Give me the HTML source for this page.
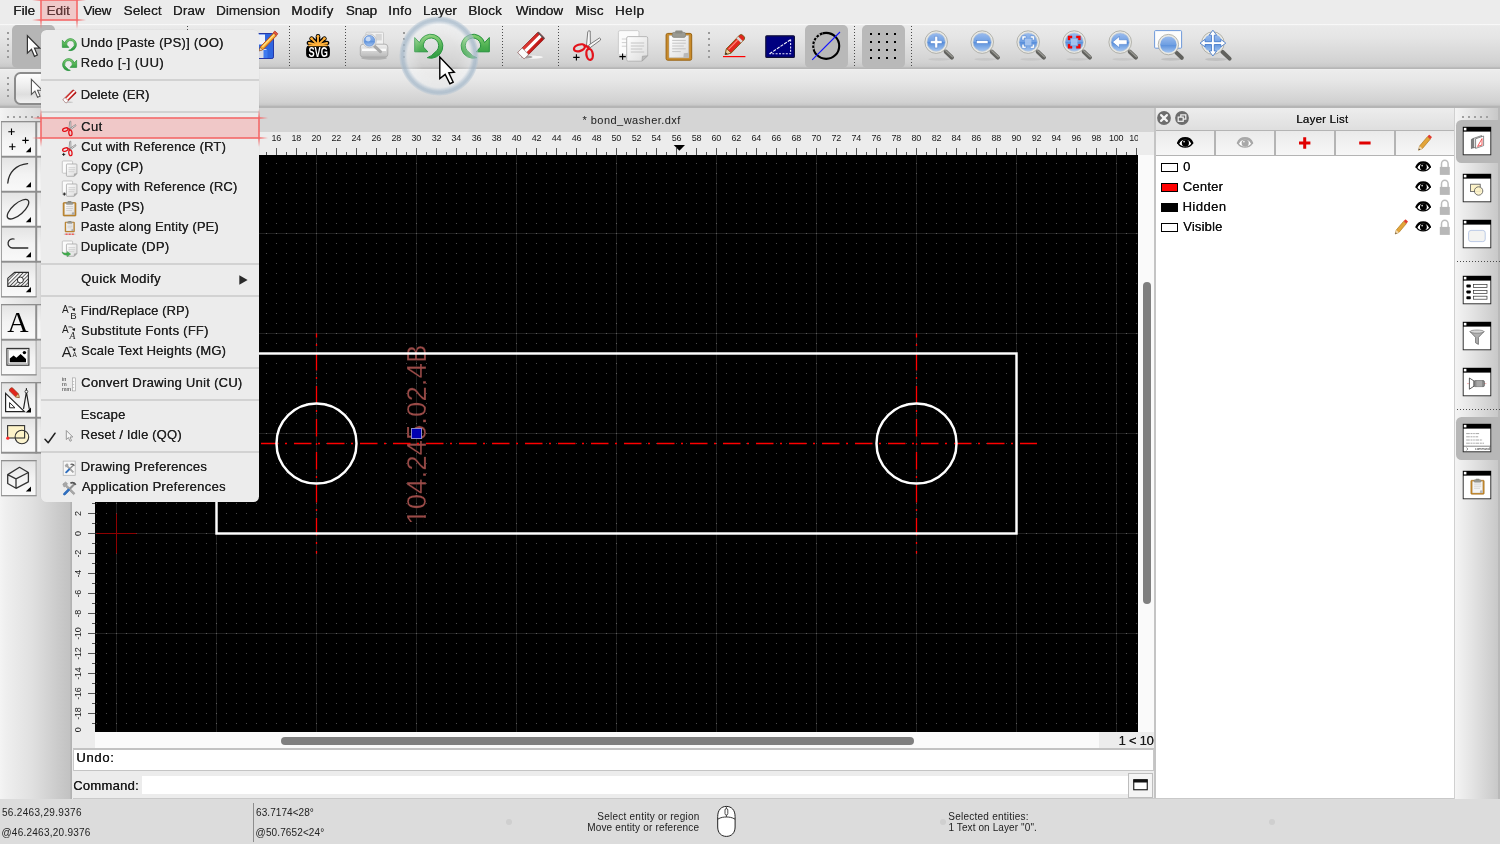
<!DOCTYPE html>
<html lang="en"><head><meta charset="utf-8"><title>QCAD - bond_washer.dxf</title>
<style>
html,body{margin:0;padding:0;}
body{width:1500px;height:844px;overflow:hidden;background:#ececec;font-family:"Liberation Sans",sans-serif;position:relative;}
#app{will-change:transform;position:absolute;left:0;top:0;width:1500px;height:844px;overflow:hidden;}
.b{position:absolute;box-sizing:border-box;display:block;}
.t{position:absolute;white-space:pre;line-height:0;display:block;}
.hv{text-shadow:0.22px 0 0 currentColor;}
.md{text-shadow:0.18px 0 0 currentColor;}
</style></head>
<body><div id="app">
<!-- menubar -->
<div class="b" style="left:0px;top:0px;width:1500px;height:24px;background:#ececec;"></div>
<span class="t hv" style="left:13.19px;top:11.00px;font-size:13.5px;letter-spacing:0.051px;color:#262626;">File</span>
<span class="t hv" style="left:46.49px;top:11.00px;font-size:13.5px;letter-spacing:-0.019px;color:#262626;">Edit</span>
<span class="t hv" style="left:83.34px;top:11.00px;font-size:13.5px;letter-spacing:-0.378px;color:#262626;">View</span>
<span class="t hv" style="left:123.59px;top:11.00px;font-size:13.5px;letter-spacing:0.078px;color:#262626;">Select</span>
<span class="t hv" style="left:172.89px;top:11.00px;font-size:13.5px;letter-spacing:0.091px;color:#262626;">Draw</span>
<span class="t hv" style="left:215.99px;top:11.00px;font-size:13.5px;letter-spacing:0.039px;color:#262626;">Dimension</span>
<span class="t hv" style="left:291.29px;top:11.00px;font-size:13.5px;letter-spacing:0.434px;color:#262626;">Modify</span>
<span class="t hv" style="left:345.69px;top:11.00px;font-size:13.5px;letter-spacing:-0.050px;color:#262626;">Snap</span>
<span class="t hv" style="left:388.15px;top:11.00px;font-size:13.5px;letter-spacing:0.332px;color:#262626;">Info</span>
<span class="t hv" style="left:422.89px;top:11.00px;font-size:13.5px;letter-spacing:0.015px;color:#262626;">Layer</span>
<span class="t hv" style="left:468.29px;top:11.00px;font-size:13.5px;letter-spacing:0.119px;color:#262626;">Block</span>
<span class="t hv" style="left:515.84px;top:11.00px;font-size:13.5px;letter-spacing:-0.178px;color:#262626;">Window</span>
<span class="t hv" style="left:575.29px;top:11.00px;font-size:13.5px;letter-spacing:0.140px;color:#262626;">Misc</span>
<span class="t hv" style="left:614.89px;top:11.00px;font-size:13.5px;letter-spacing:0.470px;color:#262626;">Help</span>
<!-- toolbars -->
<div class="b" style="left:0px;top:24px;width:1500px;height:45px;background:linear-gradient(#fbfbfb 0,#f6f6f6 0.8px,#eaeaea 1.6px,#e5e5e5 30%,#d2d2d2 85%,#cacaca 42.4px,#b6b6b6 44px,#b6b6b6);"></div>
<div class="b" style="left:0px;top:69px;width:1500px;height:38.5px;background:linear-gradient(#f2f2f2 0,#ececec 1.5px,#e6e6e6 30%,#d1d1d1 85%,#c9c9c9 35.8px,#b5b5b5 37.5px,#b5b5b5);"></div>
<div class="b" style="left:0px;top:107.5px;width:1500px;height:25px;background:#d5d5d5;"></div>
<svg class="b" style="left:0px;top:0px;" width="1500" height="110" viewBox="0 0 1500 110"><rect x="7" y="32" width="2" height="2" fill="#9a9a9a"/><rect x="7" y="38" width="2" height="2" fill="#9a9a9a"/><rect x="7" y="44" width="2" height="2" fill="#9a9a9a"/><rect x="7" y="50" width="2" height="2" fill="#9a9a9a"/><rect x="7" y="56" width="2" height="2" fill="#9a9a9a"/><rect x="7" y="77" width="2" height="2" fill="#9a9a9a"/><rect x="7" y="83" width="2" height="2" fill="#9a9a9a"/><rect x="7" y="89" width="2" height="2" fill="#9a9a9a"/><rect x="7" y="95" width="2" height="2" fill="#9a9a9a"/><rect x="403" y="32" width="2" height="2" fill="#9a9a9a"/><rect x="403" y="38" width="2" height="2" fill="#9a9a9a"/><rect x="403" y="44" width="2" height="2" fill="#9a9a9a"/><rect x="403" y="50" width="2" height="2" fill="#9a9a9a"/><rect x="403" y="56" width="2" height="2" fill="#9a9a9a"/><rect x="708" y="32" width="2" height="2" fill="#9a9a9a"/><rect x="708" y="38" width="2" height="2" fill="#9a9a9a"/><rect x="708" y="44" width="2" height="2" fill="#9a9a9a"/><rect x="708" y="50" width="2" height="2" fill="#9a9a9a"/><rect x="708" y="56" width="2" height="2" fill="#9a9a9a"/><line x1="187.5" y1="26" x2="187.5" y2="66" stroke="#4a4a4a" stroke-width="1" stroke-dasharray="1 2"/><line x1="289.5" y1="26" x2="289.5" y2="66" stroke="#4a4a4a" stroke-width="1" stroke-dasharray="1 2"/><line x1="345.5" y1="26" x2="345.5" y2="66" stroke="#4a4a4a" stroke-width="1" stroke-dasharray="1 2"/><line x1="502.5" y1="26" x2="502.5" y2="66" stroke="#4a4a4a" stroke-width="1" stroke-dasharray="1 2"/><line x1="558.5" y1="26" x2="558.5" y2="66" stroke="#4a4a4a" stroke-width="1" stroke-dasharray="1 2"/><line x1="854.5" y1="26" x2="854.5" y2="66" stroke="#4a4a4a" stroke-width="1" stroke-dasharray="1 2"/><line x1="911.5" y1="26" x2="911.5" y2="66" stroke="#4a4a4a" stroke-width="1" stroke-dasharray="1 2"/></svg>
<div class="b" style="left:12px;top:25px;width:43px;height:43px;background:#b5b5b5;border-radius:5px;"></div>
<div class="b" style="left:13.6px;top:72.2px;width:60px;height:32.6px;border:2px solid #8c8c8c;border-radius:6.5px;background:linear-gradient(#fefefe,#ececec 45%,#dedede 70%,#f0f0f0);"></div>
<div class="b" style="left:805px;top:25px;width:43px;height:43px;background:#b9b9b9;border-radius:5px;"></div>
<div class="b" style="left:862px;top:25px;width:43px;height:43px;background:#b9b9b9;border-radius:5px;"></div>
<!-- left tools -->
<div class="b" style="left:0px;top:107.5px;width:71.8px;height:691.3px;background:linear-gradient(90deg,#f4f4f4 0,#efefef 8%,#e0e0e0 45%,#cbcbcb 80%,#c2c2c2 97%,#b2b2b2 98.5%,#b2b2b2);"></div>
<svg class="b" style="left:0px;top:110px;" width="72" height="12" viewBox="0 0 72 12"><rect x="7" y="6" width="2" height="2" fill="#a0a0a0"/><rect x="13" y="6" width="2" height="2" fill="#a0a0a0"/><rect x="19" y="6" width="2" height="2" fill="#a0a0a0"/><rect x="25" y="6" width="2" height="2" fill="#a0a0a0"/><rect x="31" y="6" width="2" height="2" fill="#a0a0a0"/><rect x="37" y="6" width="2" height="2" fill="#a0a0a0"/></svg>
<svg class="b" style="left:0px;top:108px;" width="72" height="400" viewBox="0 108 72 400"><defs><linearGradient id="gBtn" x1="0" y1="0" x2="0" y2="1"><stop offset="0" stop-color="#e3e3e3"/><stop offset="0.5" stop-color="#f3f3f3"/><stop offset="1" stop-color="#f9f9f9"/></linearGradient></defs><rect x="1.5" y="121.6" width="34.6" height="35" fill="url(#gBtn)" stroke="#a3a3a3" stroke-width="1"/><rect x="36.2" y="121.6" width="34.6" height="35" fill="url(#gBtn)" stroke="#a3a3a3" stroke-width="1"/><rect x="1.5" y="157" width="34.6" height="35" fill="url(#gBtn)" stroke="#a3a3a3" stroke-width="1"/><rect x="36.2" y="157" width="34.6" height="35" fill="url(#gBtn)" stroke="#a3a3a3" stroke-width="1"/><rect x="1.5" y="192" width="34.6" height="35" fill="url(#gBtn)" stroke="#a3a3a3" stroke-width="1"/><rect x="36.2" y="192" width="34.6" height="35" fill="url(#gBtn)" stroke="#a3a3a3" stroke-width="1"/><rect x="1.5" y="227" width="34.6" height="35" fill="url(#gBtn)" stroke="#a3a3a3" stroke-width="1"/><rect x="36.2" y="227" width="34.6" height="35" fill="url(#gBtn)" stroke="#a3a3a3" stroke-width="1"/><rect x="1.5" y="262" width="34.6" height="35" fill="url(#gBtn)" stroke="#a3a3a3" stroke-width="1"/><line x1="1" y1="121.7" x2="71" y2="121.7" stroke="#8e8e8e" stroke-width="1.2"/><line x1="1" y1="156.7" x2="71" y2="156.7" stroke="#8e8e8e" stroke-width="1.8"/><line x1="1" y1="191.7" x2="71" y2="191.7" stroke="#8e8e8e" stroke-width="1.8"/><line x1="1" y1="226.7" x2="71" y2="226.7" stroke="#8e8e8e" stroke-width="1.8"/><line x1="1" y1="261.7" x2="71" y2="261.7" stroke="#8e8e8e" stroke-width="1.8"/><line x1="1" y1="296.7" x2="36.6" y2="296.7" stroke="#8e8e8e" stroke-width="1.1"/><line x1="36.3" y1="121.4" x2="36.3" y2="262.4" stroke="#8e8e8e" stroke-width="1.8"/><rect x="1.5" y="304.6" width="34.6" height="35" fill="url(#gBtn)" stroke="#a3a3a3" stroke-width="1"/><rect x="36.2" y="304.6" width="34.6" height="35" fill="url(#gBtn)" stroke="#a3a3a3" stroke-width="1"/><rect x="1.5" y="340" width="34.6" height="35" fill="url(#gBtn)" stroke="#a3a3a3" stroke-width="1"/><line x1="1" y1="304.7" x2="71" y2="304.7" stroke="#8e8e8e" stroke-width="1.2"/><line x1="1" y1="339.7" x2="71" y2="339.7" stroke="#8e8e8e" stroke-width="1.8"/><line x1="1" y1="374.7" x2="36.6" y2="374.7" stroke="#8e8e8e" stroke-width="1.1"/><line x1="36.3" y1="304.4" x2="36.3" y2="340.4" stroke="#8e8e8e" stroke-width="1.8"/><rect x="1.5" y="382.6" width="34.6" height="35" fill="url(#gBtn)" stroke="#a3a3a3" stroke-width="1"/><rect x="36.2" y="382.6" width="34.6" height="35" fill="url(#gBtn)" stroke="#a3a3a3" stroke-width="1"/><rect x="1.5" y="418" width="34.6" height="35" fill="url(#gBtn)" stroke="#a3a3a3" stroke-width="1"/><rect x="36.2" y="418" width="34.6" height="35" fill="url(#gBtn)" stroke="#a3a3a3" stroke-width="1"/><line x1="1" y1="382.7" x2="71" y2="382.7" stroke="#8e8e8e" stroke-width="1.2"/><line x1="1" y1="417.7" x2="71" y2="417.7" stroke="#8e8e8e" stroke-width="1.8"/><line x1="1" y1="452.7" x2="71" y2="452.7" stroke="#8e8e8e" stroke-width="1.8"/><line x1="36.3" y1="382.4" x2="36.3" y2="453.4" stroke="#8e8e8e" stroke-width="1.8"/><rect x="1.5" y="460.6" width="34.6" height="35" fill="url(#gBtn)" stroke="#a3a3a3" stroke-width="1"/><line x1="1" y1="460.7" x2="36.6" y2="460.7" stroke="#8e8e8e" stroke-width="1.2"/><line x1="1" y1="495.7" x2="36.6" y2="495.7" stroke="#8e8e8e" stroke-width="1.1"/></svg>
<!-- document title -->
<span class="t" style="left:582.52px;top:120.00px;font-size:11px;letter-spacing:0.459px;color:#1a1a1a;">* bond_washer.dxf</span>
<!-- rulers -->
<div class="b" style="left:71.8px;top:132px;width:1082.2px;height:23px;background:#ececec;"></div>
<div class="b" style="left:71.8px;top:155px;width:23.2px;height:593.5px;background:#ececec;"></div>
<div class="b" style="left:1138px;top:155px;width:15.5px;height:577px;background:#fafafa;"></div>
<div class="b" style="left:95px;top:732px;width:1058.5px;height:16.5px;background:#fafafa;"></div>
<div class="b" style="left:1143px;top:282px;width:8px;height:322px;background:#7f7f7f;border-radius:4px;"></div>
<div class="b" style="left:281px;top:737px;width:633px;height:8px;background:#7f7f7f;border-radius:4px;"></div>
<div class="b" style="left:1099px;top:732px;width:54.5px;height:16.5px;background:#ececec;"></div>
<span class="t md" style="left:1118.61px;top:741.00px;font-size:13px;letter-spacing:-0.281px;color:#1a1a1a;">1 &lt; 10</span>
<svg class="b" style="left:72px;top:132px;" width="1066" height="23" viewBox="0 0 1066 23"><line x1="24.5" y1="16" x2="24.5" y2="23" stroke="#555" stroke-width="1"/><line x1="34.5" y1="20" x2="34.5" y2="23" stroke="#555" stroke-width="1"/><line x1="44.5" y1="16" x2="44.5" y2="23" stroke="#555" stroke-width="1"/><line x1="54.5" y1="20" x2="54.5" y2="23" stroke="#555" stroke-width="1"/><line x1="64.5" y1="16" x2="64.5" y2="23" stroke="#555" stroke-width="1"/><line x1="74.5" y1="20" x2="74.5" y2="23" stroke="#555" stroke-width="1"/><line x1="84.5" y1="16" x2="84.5" y2="23" stroke="#555" stroke-width="1"/><line x1="94.5" y1="20" x2="94.5" y2="23" stroke="#555" stroke-width="1"/><line x1="104.5" y1="16" x2="104.5" y2="23" stroke="#555" stroke-width="1"/><line x1="114.5" y1="20" x2="114.5" y2="23" stroke="#555" stroke-width="1"/><line x1="124.5" y1="16" x2="124.5" y2="23" stroke="#555" stroke-width="1"/><line x1="134.5" y1="20" x2="134.5" y2="23" stroke="#555" stroke-width="1"/><line x1="144.5" y1="16" x2="144.5" y2="23" stroke="#555" stroke-width="1"/><line x1="154.5" y1="20" x2="154.5" y2="23" stroke="#555" stroke-width="1"/><line x1="164.5" y1="16" x2="164.5" y2="23" stroke="#555" stroke-width="1"/><line x1="174.5" y1="20" x2="174.5" y2="23" stroke="#555" stroke-width="1"/><line x1="184.5" y1="16" x2="184.5" y2="23" stroke="#555" stroke-width="1"/><line x1="194.5" y1="20" x2="194.5" y2="23" stroke="#555" stroke-width="1"/><line x1="204.5" y1="16" x2="204.5" y2="23" stroke="#555" stroke-width="1"/><line x1="214.5" y1="20" x2="214.5" y2="23" stroke="#555" stroke-width="1"/><line x1="224.5" y1="16" x2="224.5" y2="23" stroke="#555" stroke-width="1"/><line x1="234.5" y1="20" x2="234.5" y2="23" stroke="#555" stroke-width="1"/><line x1="244.5" y1="16" x2="244.5" y2="23" stroke="#555" stroke-width="1"/><line x1="254.5" y1="20" x2="254.5" y2="23" stroke="#555" stroke-width="1"/><line x1="264.5" y1="16" x2="264.5" y2="23" stroke="#555" stroke-width="1"/><line x1="274.5" y1="20" x2="274.5" y2="23" stroke="#555" stroke-width="1"/><line x1="284.5" y1="16" x2="284.5" y2="23" stroke="#555" stroke-width="1"/><line x1="294.5" y1="20" x2="294.5" y2="23" stroke="#555" stroke-width="1"/><line x1="304.5" y1="16" x2="304.5" y2="23" stroke="#555" stroke-width="1"/><line x1="314.5" y1="20" x2="314.5" y2="23" stroke="#555" stroke-width="1"/><line x1="324.5" y1="16" x2="324.5" y2="23" stroke="#555" stroke-width="1"/><line x1="334.5" y1="20" x2="334.5" y2="23" stroke="#555" stroke-width="1"/><line x1="344.5" y1="16" x2="344.5" y2="23" stroke="#555" stroke-width="1"/><line x1="354.5" y1="20" x2="354.5" y2="23" stroke="#555" stroke-width="1"/><line x1="364.5" y1="16" x2="364.5" y2="23" stroke="#555" stroke-width="1"/><line x1="374.5" y1="20" x2="374.5" y2="23" stroke="#555" stroke-width="1"/><line x1="384.5" y1="16" x2="384.5" y2="23" stroke="#555" stroke-width="1"/><line x1="394.5" y1="20" x2="394.5" y2="23" stroke="#555" stroke-width="1"/><line x1="404.5" y1="16" x2="404.5" y2="23" stroke="#555" stroke-width="1"/><line x1="414.5" y1="20" x2="414.5" y2="23" stroke="#555" stroke-width="1"/><line x1="424.5" y1="16" x2="424.5" y2="23" stroke="#555" stroke-width="1"/><line x1="434.5" y1="20" x2="434.5" y2="23" stroke="#555" stroke-width="1"/><line x1="444.5" y1="16" x2="444.5" y2="23" stroke="#555" stroke-width="1"/><line x1="454.5" y1="20" x2="454.5" y2="23" stroke="#555" stroke-width="1"/><line x1="464.5" y1="16" x2="464.5" y2="23" stroke="#555" stroke-width="1"/><line x1="474.5" y1="20" x2="474.5" y2="23" stroke="#555" stroke-width="1"/><line x1="484.5" y1="16" x2="484.5" y2="23" stroke="#555" stroke-width="1"/><line x1="494.5" y1="20" x2="494.5" y2="23" stroke="#555" stroke-width="1"/><line x1="504.5" y1="16" x2="504.5" y2="23" stroke="#555" stroke-width="1"/><line x1="514.5" y1="20" x2="514.5" y2="23" stroke="#555" stroke-width="1"/><line x1="524.5" y1="16" x2="524.5" y2="23" stroke="#555" stroke-width="1"/><line x1="534.5" y1="20" x2="534.5" y2="23" stroke="#555" stroke-width="1"/><line x1="544.5" y1="16" x2="544.5" y2="23" stroke="#555" stroke-width="1"/><line x1="554.5" y1="20" x2="554.5" y2="23" stroke="#555" stroke-width="1"/><line x1="564.5" y1="16" x2="564.5" y2="23" stroke="#555" stroke-width="1"/><line x1="574.5" y1="20" x2="574.5" y2="23" stroke="#555" stroke-width="1"/><line x1="584.5" y1="16" x2="584.5" y2="23" stroke="#555" stroke-width="1"/><line x1="594.5" y1="20" x2="594.5" y2="23" stroke="#555" stroke-width="1"/><line x1="604.5" y1="16" x2="604.5" y2="23" stroke="#555" stroke-width="1"/><line x1="614.5" y1="20" x2="614.5" y2="23" stroke="#555" stroke-width="1"/><line x1="624.5" y1="16" x2="624.5" y2="23" stroke="#555" stroke-width="1"/><line x1="634.5" y1="20" x2="634.5" y2="23" stroke="#555" stroke-width="1"/><line x1="644.5" y1="16" x2="644.5" y2="23" stroke="#555" stroke-width="1"/><line x1="654.5" y1="20" x2="654.5" y2="23" stroke="#555" stroke-width="1"/><line x1="664.5" y1="16" x2="664.5" y2="23" stroke="#555" stroke-width="1"/><line x1="674.5" y1="20" x2="674.5" y2="23" stroke="#555" stroke-width="1"/><line x1="684.5" y1="16" x2="684.5" y2="23" stroke="#555" stroke-width="1"/><line x1="694.5" y1="20" x2="694.5" y2="23" stroke="#555" stroke-width="1"/><line x1="704.5" y1="16" x2="704.5" y2="23" stroke="#555" stroke-width="1"/><line x1="714.5" y1="20" x2="714.5" y2="23" stroke="#555" stroke-width="1"/><line x1="724.5" y1="16" x2="724.5" y2="23" stroke="#555" stroke-width="1"/><line x1="734.5" y1="20" x2="734.5" y2="23" stroke="#555" stroke-width="1"/><line x1="744.5" y1="16" x2="744.5" y2="23" stroke="#555" stroke-width="1"/><line x1="754.5" y1="20" x2="754.5" y2="23" stroke="#555" stroke-width="1"/><line x1="764.5" y1="16" x2="764.5" y2="23" stroke="#555" stroke-width="1"/><line x1="774.5" y1="20" x2="774.5" y2="23" stroke="#555" stroke-width="1"/><line x1="784.5" y1="16" x2="784.5" y2="23" stroke="#555" stroke-width="1"/><line x1="794.5" y1="20" x2="794.5" y2="23" stroke="#555" stroke-width="1"/><line x1="804.5" y1="16" x2="804.5" y2="23" stroke="#555" stroke-width="1"/><line x1="814.5" y1="20" x2="814.5" y2="23" stroke="#555" stroke-width="1"/><line x1="824.5" y1="16" x2="824.5" y2="23" stroke="#555" stroke-width="1"/><line x1="834.5" y1="20" x2="834.5" y2="23" stroke="#555" stroke-width="1"/><line x1="844.5" y1="16" x2="844.5" y2="23" stroke="#555" stroke-width="1"/><line x1="854.5" y1="20" x2="854.5" y2="23" stroke="#555" stroke-width="1"/><line x1="864.5" y1="16" x2="864.5" y2="23" stroke="#555" stroke-width="1"/><line x1="874.5" y1="20" x2="874.5" y2="23" stroke="#555" stroke-width="1"/><line x1="884.5" y1="16" x2="884.5" y2="23" stroke="#555" stroke-width="1"/><line x1="894.5" y1="20" x2="894.5" y2="23" stroke="#555" stroke-width="1"/><line x1="904.5" y1="16" x2="904.5" y2="23" stroke="#555" stroke-width="1"/><line x1="914.5" y1="20" x2="914.5" y2="23" stroke="#555" stroke-width="1"/><line x1="924.5" y1="16" x2="924.5" y2="23" stroke="#555" stroke-width="1"/><line x1="934.5" y1="20" x2="934.5" y2="23" stroke="#555" stroke-width="1"/><line x1="944.5" y1="16" x2="944.5" y2="23" stroke="#555" stroke-width="1"/><line x1="954.5" y1="20" x2="954.5" y2="23" stroke="#555" stroke-width="1"/><line x1="964.5" y1="16" x2="964.5" y2="23" stroke="#555" stroke-width="1"/><line x1="974.5" y1="20" x2="974.5" y2="23" stroke="#555" stroke-width="1"/><line x1="984.5" y1="16" x2="984.5" y2="23" stroke="#555" stroke-width="1"/><line x1="994.5" y1="20" x2="994.5" y2="23" stroke="#555" stroke-width="1"/><line x1="1004.5" y1="16" x2="1004.5" y2="23" stroke="#555" stroke-width="1"/><line x1="1014.5" y1="20" x2="1014.5" y2="23" stroke="#555" stroke-width="1"/><line x1="1024.5" y1="16" x2="1024.5" y2="23" stroke="#555" stroke-width="1"/><line x1="1034.5" y1="20" x2="1034.5" y2="23" stroke="#555" stroke-width="1"/><line x1="1044.5" y1="16" x2="1044.5" y2="23" stroke="#555" stroke-width="1"/><line x1="1054.5" y1="20" x2="1054.5" y2="23" stroke="#555" stroke-width="1"/><line x1="1064.5" y1="16" x2="1064.5" y2="23" stroke="#555" stroke-width="1"/><path d="M601.7 13 L613 13 L607.4 18.8 Z" fill="#000"/></svg>
<span class="t" style="left:271.47px;top:138.00px;font-size:9px;letter-spacing:-0.250px;color:#1a1a1a;">16</span>
<span class="t" style="left:291.47px;top:138.00px;font-size:9px;letter-spacing:-0.250px;color:#1a1a1a;">18</span>
<span class="t" style="left:311.57px;top:138.00px;font-size:9px;letter-spacing:-0.250px;color:#1a1a1a;">20</span>
<span class="t" style="left:331.62px;top:138.00px;font-size:9px;letter-spacing:-0.250px;color:#1a1a1a;">22</span>
<span class="t" style="left:351.53px;top:138.00px;font-size:9px;letter-spacing:-0.250px;color:#1a1a1a;">24</span>
<span class="t" style="left:371.59px;top:138.00px;font-size:9px;letter-spacing:-0.250px;color:#1a1a1a;">26</span>
<span class="t" style="left:391.59px;top:138.00px;font-size:9px;letter-spacing:-0.250px;color:#1a1a1a;">28</span>
<span class="t" style="left:411.62px;top:138.00px;font-size:9px;letter-spacing:-0.250px;color:#1a1a1a;">30</span>
<span class="t" style="left:431.67px;top:138.00px;font-size:9px;letter-spacing:-0.250px;color:#1a1a1a;">32</span>
<span class="t" style="left:451.58px;top:138.00px;font-size:9px;letter-spacing:-0.250px;color:#1a1a1a;">34</span>
<span class="t" style="left:471.65px;top:138.00px;font-size:9px;letter-spacing:-0.250px;color:#1a1a1a;">36</span>
<span class="t" style="left:491.64px;top:138.00px;font-size:9px;letter-spacing:-0.250px;color:#1a1a1a;">38</span>
<span class="t" style="left:511.69px;top:138.00px;font-size:9px;letter-spacing:-0.250px;color:#1a1a1a;">40</span>
<span class="t" style="left:531.74px;top:138.00px;font-size:9px;letter-spacing:-0.250px;color:#1a1a1a;">42</span>
<span class="t" style="left:551.65px;top:138.00px;font-size:9px;letter-spacing:-0.250px;color:#1a1a1a;">44</span>
<span class="t" style="left:571.71px;top:138.00px;font-size:9px;letter-spacing:-0.250px;color:#1a1a1a;">46</span>
<span class="t" style="left:591.71px;top:138.00px;font-size:9px;letter-spacing:-0.250px;color:#1a1a1a;">48</span>
<span class="t" style="left:611.62px;top:138.00px;font-size:9px;letter-spacing:-0.250px;color:#1a1a1a;">50</span>
<span class="t" style="left:631.67px;top:138.00px;font-size:9px;letter-spacing:-0.250px;color:#1a1a1a;">52</span>
<span class="t" style="left:651.57px;top:138.00px;font-size:9px;letter-spacing:-0.250px;color:#1a1a1a;">54</span>
<span class="t" style="left:671.64px;top:138.00px;font-size:9px;letter-spacing:-0.250px;color:#1a1a1a;">56</span>
<span class="t" style="left:691.64px;top:138.00px;font-size:9px;letter-spacing:-0.250px;color:#1a1a1a;">58</span>
<span class="t" style="left:711.57px;top:138.00px;font-size:9px;letter-spacing:-0.250px;color:#1a1a1a;">60</span>
<span class="t" style="left:731.62px;top:138.00px;font-size:9px;letter-spacing:-0.250px;color:#1a1a1a;">62</span>
<span class="t" style="left:751.52px;top:138.00px;font-size:9px;letter-spacing:-0.250px;color:#1a1a1a;">64</span>
<span class="t" style="left:771.59px;top:138.00px;font-size:9px;letter-spacing:-0.250px;color:#1a1a1a;">66</span>
<span class="t" style="left:791.59px;top:138.00px;font-size:9px;letter-spacing:-0.250px;color:#1a1a1a;">68</span>
<span class="t" style="left:811.56px;top:138.00px;font-size:9px;letter-spacing:-0.250px;color:#1a1a1a;">70</span>
<span class="t" style="left:831.62px;top:138.00px;font-size:9px;letter-spacing:-0.250px;color:#1a1a1a;">72</span>
<span class="t" style="left:851.52px;top:138.00px;font-size:9px;letter-spacing:-0.250px;color:#1a1a1a;">74</span>
<span class="t" style="left:871.59px;top:138.00px;font-size:9px;letter-spacing:-0.250px;color:#1a1a1a;">76</span>
<span class="t" style="left:891.58px;top:138.00px;font-size:9px;letter-spacing:-0.250px;color:#1a1a1a;">78</span>
<span class="t" style="left:911.60px;top:138.00px;font-size:9px;letter-spacing:-0.250px;color:#1a1a1a;">80</span>
<span class="t" style="left:931.65px;top:138.00px;font-size:9px;letter-spacing:-0.250px;color:#1a1a1a;">82</span>
<span class="t" style="left:951.56px;top:138.00px;font-size:9px;letter-spacing:-0.250px;color:#1a1a1a;">84</span>
<span class="t" style="left:971.62px;top:138.00px;font-size:9px;letter-spacing:-0.250px;color:#1a1a1a;">86</span>
<span class="t" style="left:991.62px;top:138.00px;font-size:9px;letter-spacing:-0.250px;color:#1a1a1a;">88</span>
<span class="t" style="left:1011.58px;top:138.00px;font-size:9px;letter-spacing:-0.250px;color:#1a1a1a;">90</span>
<span class="t" style="left:1031.64px;top:138.00px;font-size:9px;letter-spacing:-0.250px;color:#1a1a1a;">92</span>
<span class="t" style="left:1051.54px;top:138.00px;font-size:9px;letter-spacing:-0.250px;color:#1a1a1a;">94</span>
<span class="t" style="left:1071.61px;top:138.00px;font-size:9px;letter-spacing:-0.250px;color:#1a1a1a;">96</span>
<span class="t" style="left:1091.60px;top:138.00px;font-size:9px;letter-spacing:-0.250px;color:#1a1a1a;">98</span>
<span class="t" style="left:1109.07px;top:138.00px;font-size:9px;letter-spacing:-0.250px;color:#1a1a1a;">100</span>
<div class="b" style="left:1120px;top:132px;width:18px;height:16px;overflow:hidden;"><span class="t" style="left:9.13px;top:6.00px;font-size:9px;letter-spacing:-0.250px;color:#1a1a1a;">102</span></div>
<svg class="b" style="left:72px;top:155px;" width="23" height="577" viewBox="0 0 23 577"><line x1="20" y1="568.5" x2="23" y2="568.5" stroke="#555" stroke-width="1"/><line x1="16" y1="558.5" x2="23" y2="558.5" stroke="#555" stroke-width="1"/><line x1="20" y1="548.5" x2="23" y2="548.5" stroke="#555" stroke-width="1"/><line x1="16" y1="538.5" x2="23" y2="538.5" stroke="#555" stroke-width="1"/><line x1="20" y1="528.5" x2="23" y2="528.5" stroke="#555" stroke-width="1"/><line x1="16" y1="518.5" x2="23" y2="518.5" stroke="#555" stroke-width="1"/><line x1="20" y1="508.5" x2="23" y2="508.5" stroke="#555" stroke-width="1"/><line x1="16" y1="498.5" x2="23" y2="498.5" stroke="#555" stroke-width="1"/><line x1="20" y1="488.5" x2="23" y2="488.5" stroke="#555" stroke-width="1"/><line x1="16" y1="478.5" x2="23" y2="478.5" stroke="#555" stroke-width="1"/><line x1="20" y1="468.5" x2="23" y2="468.5" stroke="#555" stroke-width="1"/><line x1="16" y1="458.5" x2="23" y2="458.5" stroke="#555" stroke-width="1"/><line x1="20" y1="448.5" x2="23" y2="448.5" stroke="#555" stroke-width="1"/><line x1="16" y1="438.5" x2="23" y2="438.5" stroke="#555" stroke-width="1"/><line x1="20" y1="428.5" x2="23" y2="428.5" stroke="#555" stroke-width="1"/><line x1="16" y1="418.5" x2="23" y2="418.5" stroke="#555" stroke-width="1"/><line x1="20" y1="408.5" x2="23" y2="408.5" stroke="#555" stroke-width="1"/><line x1="16" y1="398.5" x2="23" y2="398.5" stroke="#555" stroke-width="1"/><line x1="20" y1="388.5" x2="23" y2="388.5" stroke="#555" stroke-width="1"/><line x1="16" y1="378.5" x2="23" y2="378.5" stroke="#555" stroke-width="1"/><line x1="20" y1="368.5" x2="23" y2="368.5" stroke="#555" stroke-width="1"/><line x1="16" y1="358.5" x2="23" y2="358.5" stroke="#555" stroke-width="1"/><line x1="20" y1="348.5" x2="23" y2="348.5" stroke="#555" stroke-width="1"/><line x1="16" y1="338.5" x2="23" y2="338.5" stroke="#555" stroke-width="1"/><line x1="20" y1="328.5" x2="23" y2="328.5" stroke="#555" stroke-width="1"/><line x1="16" y1="318.5" x2="23" y2="318.5" stroke="#555" stroke-width="1"/><line x1="20" y1="308.5" x2="23" y2="308.5" stroke="#555" stroke-width="1"/><line x1="16" y1="298.5" x2="23" y2="298.5" stroke="#555" stroke-width="1"/><line x1="20" y1="288.5" x2="23" y2="288.5" stroke="#555" stroke-width="1"/><line x1="16" y1="278.5" x2="23" y2="278.5" stroke="#555" stroke-width="1"/><line x1="20" y1="268.5" x2="23" y2="268.5" stroke="#555" stroke-width="1"/><line x1="16" y1="258.5" x2="23" y2="258.5" stroke="#555" stroke-width="1"/><line x1="20" y1="248.5" x2="23" y2="248.5" stroke="#555" stroke-width="1"/><line x1="16" y1="238.5" x2="23" y2="238.5" stroke="#555" stroke-width="1"/><line x1="20" y1="228.5" x2="23" y2="228.5" stroke="#555" stroke-width="1"/><line x1="16" y1="218.5" x2="23" y2="218.5" stroke="#555" stroke-width="1"/><line x1="20" y1="208.5" x2="23" y2="208.5" stroke="#555" stroke-width="1"/><line x1="16" y1="198.5" x2="23" y2="198.5" stroke="#555" stroke-width="1"/><line x1="20" y1="188.5" x2="23" y2="188.5" stroke="#555" stroke-width="1"/><line x1="16" y1="178.5" x2="23" y2="178.5" stroke="#555" stroke-width="1"/><line x1="20" y1="168.5" x2="23" y2="168.5" stroke="#555" stroke-width="1"/><line x1="16" y1="158.5" x2="23" y2="158.5" stroke="#555" stroke-width="1"/><line x1="20" y1="148.5" x2="23" y2="148.5" stroke="#555" stroke-width="1"/><line x1="16" y1="138.5" x2="23" y2="138.5" stroke="#555" stroke-width="1"/><line x1="20" y1="128.5" x2="23" y2="128.5" stroke="#555" stroke-width="1"/><line x1="16" y1="118.5" x2="23" y2="118.5" stroke="#555" stroke-width="1"/><line x1="20" y1="108.5" x2="23" y2="108.5" stroke="#555" stroke-width="1"/><line x1="16" y1="98.5" x2="23" y2="98.5" stroke="#555" stroke-width="1"/><line x1="20" y1="88.5" x2="23" y2="88.5" stroke="#555" stroke-width="1"/><line x1="16" y1="78.5" x2="23" y2="78.5" stroke="#555" stroke-width="1"/><line x1="20" y1="68.5" x2="23" y2="68.5" stroke="#555" stroke-width="1"/><line x1="16" y1="58.5" x2="23" y2="58.5" stroke="#555" stroke-width="1"/><line x1="20" y1="48.5" x2="23" y2="48.5" stroke="#555" stroke-width="1"/><line x1="16" y1="38.5" x2="23" y2="38.5" stroke="#555" stroke-width="1"/><line x1="20" y1="28.5" x2="23" y2="28.5" stroke="#555" stroke-width="1"/><line x1="16" y1="18.5" x2="23" y2="18.5" stroke="#555" stroke-width="1"/><line x1="20" y1="8.5" x2="23" y2="8.5" stroke="#555" stroke-width="1"/></svg>
<svg class="b" style="left:72px;top:155px;overflow:hidden;font-family:'Liberation Sans', sans-serif;" width="23" height="577" viewBox="72 0 23 577"><text transform="translate(81.4 578.7) rotate(-90)" text-anchor="middle" font-size="9" letter-spacing="-0.25" fill="#1a1a1a">-20</text><text transform="translate(81.4 558.7) rotate(-90)" text-anchor="middle" font-size="9" letter-spacing="-0.25" fill="#1a1a1a">-18</text><text transform="translate(81.4 538.7) rotate(-90)" text-anchor="middle" font-size="9" letter-spacing="-0.25" fill="#1a1a1a">-16</text><text transform="translate(81.4 518.7) rotate(-90)" text-anchor="middle" font-size="9" letter-spacing="-0.25" fill="#1a1a1a">-14</text><text transform="translate(81.4 498.7) rotate(-90)" text-anchor="middle" font-size="9" letter-spacing="-0.25" fill="#1a1a1a">-12</text><text transform="translate(81.4 478.7) rotate(-90)" text-anchor="middle" font-size="9" letter-spacing="-0.25" fill="#1a1a1a">-10</text><text transform="translate(81.4 458.7) rotate(-90)" text-anchor="middle" font-size="9" letter-spacing="-0.25" fill="#1a1a1a">-8</text><text transform="translate(81.4 438.7) rotate(-90)" text-anchor="middle" font-size="9" letter-spacing="-0.25" fill="#1a1a1a">-6</text><text transform="translate(81.4 418.7) rotate(-90)" text-anchor="middle" font-size="9" letter-spacing="-0.25" fill="#1a1a1a">-4</text><text transform="translate(81.4 398.7) rotate(-90)" text-anchor="middle" font-size="9" letter-spacing="-0.25" fill="#1a1a1a">-2</text><text transform="translate(81.4 378.7) rotate(-90)" text-anchor="middle" font-size="9" letter-spacing="-0.25" fill="#1a1a1a">0</text><text transform="translate(81.4 358.7) rotate(-90)" text-anchor="middle" font-size="9" letter-spacing="-0.25" fill="#1a1a1a">2</text><text transform="translate(81.4 338.7) rotate(-90)" text-anchor="middle" font-size="9" letter-spacing="-0.25" fill="#1a1a1a">4</text><text transform="translate(81.4 318.7) rotate(-90)" text-anchor="middle" font-size="9" letter-spacing="-0.25" fill="#1a1a1a">6</text><text transform="translate(81.4 298.7) rotate(-90)" text-anchor="middle" font-size="9" letter-spacing="-0.25" fill="#1a1a1a">8</text><text transform="translate(81.4 278.7) rotate(-90)" text-anchor="middle" font-size="9" letter-spacing="-0.25" fill="#1a1a1a">10</text><text transform="translate(81.4 258.7) rotate(-90)" text-anchor="middle" font-size="9" letter-spacing="-0.25" fill="#1a1a1a">12</text><text transform="translate(81.4 238.7) rotate(-90)" text-anchor="middle" font-size="9" letter-spacing="-0.25" fill="#1a1a1a">14</text><text transform="translate(81.4 218.7) rotate(-90)" text-anchor="middle" font-size="9" letter-spacing="-0.25" fill="#1a1a1a">16</text><text transform="translate(81.4 198.7) rotate(-90)" text-anchor="middle" font-size="9" letter-spacing="-0.25" fill="#1a1a1a">18</text><text transform="translate(81.4 178.7) rotate(-90)" text-anchor="middle" font-size="9" letter-spacing="-0.25" fill="#1a1a1a">20</text><text transform="translate(81.4 158.7) rotate(-90)" text-anchor="middle" font-size="9" letter-spacing="-0.25" fill="#1a1a1a">22</text><text transform="translate(81.4 138.7) rotate(-90)" text-anchor="middle" font-size="9" letter-spacing="-0.25" fill="#1a1a1a">24</text><text transform="translate(81.4 118.7) rotate(-90)" text-anchor="middle" font-size="9" letter-spacing="-0.25" fill="#1a1a1a">26</text><text transform="translate(81.4 98.7) rotate(-90)" text-anchor="middle" font-size="9" letter-spacing="-0.25" fill="#1a1a1a">28</text><text transform="translate(81.4 78.7) rotate(-90)" text-anchor="middle" font-size="9" letter-spacing="-0.25" fill="#1a1a1a">30</text><text transform="translate(81.4 58.7) rotate(-90)" text-anchor="middle" font-size="9" letter-spacing="-0.25" fill="#1a1a1a">32</text><text transform="translate(81.4 38.7) rotate(-90)" text-anchor="middle" font-size="9" letter-spacing="-0.25" fill="#1a1a1a">34</text><text transform="translate(81.4 18.7) rotate(-90)" text-anchor="middle" font-size="9" letter-spacing="-0.25" fill="#1a1a1a">36</text></svg>
<!-- command line -->
<div class="b" style="left:72.5px;top:748.5px;width:1081px;height:50px;background:#ececec;"></div>
<div class="b" style="left:72.5px;top:748px;width:1081px;height:2px;background:#c2c2c2;"></div>
<div class="b" style="left:73.5px;top:750px;width:1080px;height:20.5px;background:#fff;"></div>
<div class="b" style="left:72.5px;top:770.3px;width:1081px;height:1.2px;background:#c4c4c4;"></div>
<div class="b" style="left:72.5px;top:749px;width:1.2px;height:22px;background:#c8c8c8;"></div>
<div class="b" style="left:1152.5px;top:749px;width:1.2px;height:22px;background:#c8c8c8;"></div>
<span class="t md" style="left:76.30px;top:758.00px;font-size:13px;letter-spacing:0.700px;color:#1a1a1a;">Undo:</span>
<div class="b" style="left:142px;top:776px;width:985.5px;height:18px;background:#fff;"></div>
<span class="t md" style="left:73.14px;top:786.00px;font-size:13px;letter-spacing:0.281px;color:#1a1a1a;">Command:</span>
<div class="b" style="left:1127.5px;top:772.5px;width:25.5px;height:25px;background:#f4f4f4;border:1px solid #bdbdbd;"></div>
<svg class="b" style="left:1133px;top:779px;" width="15" height="12" viewBox="0 0 15 12"><rect x="0.75" y="0.75" width="13.5" height="10" fill="#fff" stroke="#111" stroke-width="1.1"/><rect x="0.5" y="0.5" width="14" height="3" fill="#111"/></svg>
<!-- status bar -->
<div class="b" style="left:0px;top:798.8px;width:1500px;height:45.2px;background:#dcdcdc;"></div>
<div class="b" style="left:72.5px;top:797.7px;width:1382px;height:1.1px;background:#c9c9c9;"></div>
<span class="t" style="left:2.00px;top:813.00px;font-size:10px;letter-spacing:0.312px;color:#222;">56.2463,29.9376</span>
<span class="t" style="left:1.41px;top:833.00px;font-size:10px;letter-spacing:0.253px;color:#222;">@46.2463,20.9376</span>
<div class="b" style="left:252.6px;top:803px;width:1.2px;height:39px;background:#8d8d8d;"></div>
<span class="t" style="left:256.09px;top:813.00px;font-size:10px;letter-spacing:0.060px;color:#222;">63.7174&lt;28°</span>
<span class="t" style="left:255.61px;top:833.00px;font-size:10px;letter-spacing:0.121px;color:#222;">@50.7652&lt;24°</span>
<span class="t" style="left:597.35px;top:817.00px;font-size:10px;letter-spacing:0.236px;color:#222;">Select entity or region</span>
<span class="t" style="left:587.18px;top:828.00px;font-size:10px;letter-spacing:0.176px;color:#222;">Move entity or reference</span>
<span class="t" style="left:948.35px;top:817.00px;font-size:10px;letter-spacing:0.236px;color:#222;">Selected entities:</span>
<span class="t" style="left:948.44px;top:828.00px;font-size:10px;letter-spacing:0.104px;color:#222;">1 Text on Layer "0".</span>
<div class="b" style="left:506.3px;top:819px;width:6px;height:6px;background:#cfcfcf;border-radius:3px;"></div>
<div class="b" style="left:940.3px;top:819px;width:6px;height:6px;background:#cfcfcf;border-radius:3px;"></div>
<div class="b" style="left:1269.3px;top:819px;width:6px;height:6px;background:#cfcfcf;border-radius:3px;"></div>
<!-- layer list -->
<div class="b" style="left:1154px;top:107.5px;width:301px;height:690.5px;background:#fff;"></div>
<div class="b" style="left:1154px;top:107.5px;width:1.6px;height:690.5px;background:#c4c4c4;"></div>
<div class="b" style="left:1155.5px;top:107.5px;width:299px;height:23px;background:linear-gradient(#ededed,#dedede);"></div>
<span class="t md" style="left:1296.26px;top:119.00px;font-size:11.5px;letter-spacing:0.219px;color:#1c1c1c;">Layer List</span>
<div class="b" style="left:1155.5px;top:130px;width:299px;height:25.8px;background:#b4b4b4;"></div>
<div class="b" style="left:1156.3px;top:130.8px;width:57.7px;height:23.8px;background:linear-gradient(#eaeaea,#f1f1f1 50%,#f7f7f7);"></div>
<div class="b" style="left:1215.8px;top:130.8px;width:58.2px;height:23.8px;background:linear-gradient(#eaeaea,#f1f1f1 50%,#f7f7f7);"></div>
<div class="b" style="left:1275.8px;top:130.8px;width:58.2px;height:23.8px;background:linear-gradient(#eaeaea,#f1f1f1 50%,#f7f7f7);"></div>
<div class="b" style="left:1335.8px;top:130.8px;width:58.1px;height:23.8px;background:linear-gradient(#eaeaea,#f1f1f1 50%,#f7f7f7);"></div>
<div class="b" style="left:1395.7px;top:130.8px;width:58px;height:23.8px;background:linear-gradient(#eaeaea,#f1f1f1 50%,#f7f7f7);"></div>
<div class="b" style="left:1161px;top:162.7px;width:16.5px;height:9.4px;background:#fff;border:1px solid #000;"></div>
<span class="t md" style="left:1183.09px;top:167.00px;font-size:13px;letter-spacing:0.000px;color:#111;">0</span>
<div class="b" style="left:1161px;top:182.7px;width:16.5px;height:9.4px;background:#f00;border:1px solid #000;"></div>
<span class="t md" style="left:1182.74px;top:187.00px;font-size:13px;letter-spacing:0.211px;color:#111;">Center</span>
<div class="b" style="left:1161px;top:202.7px;width:16.5px;height:9.4px;background:#000;border:1px solid #000;"></div>
<span class="t md" style="left:1182.53px;top:207.00px;font-size:13px;letter-spacing:0.463px;color:#111;">Hidden</span>
<div class="b" style="left:1161px;top:222.7px;width:16.5px;height:9.4px;background:#fff;border:1px solid #000;"></div>
<span class="t md" style="left:1183.14px;top:227.00px;font-size:13px;letter-spacing:0.190px;color:#111;">Visible</span>
<!-- right strip -->
<div class="b" style="left:1454.6px;top:107.5px;width:45.4px;height:691.3px;background:#b9b9b9;"></div>
<div class="b" style="left:1454.6px;top:107.5px;width:43.6px;height:691.3px;background:linear-gradient(90deg,#f4f4f4 0,#e8e8e8 30%,#d6d6d6 70%,#c8c8c8);"></div>
<div class="b" style="left:1454.2px;top:107.5px;width:1px;height:691.3px;background:#d0d0d0;"></div>
<div class="b" style="left:1456px;top:120.2px;width:44px;height:43px;background:#b7b7b7;border-radius:5.5px 0 0 5.5px;"></div>
<div class="b" style="left:1456px;top:417px;width:44px;height:43px;background:#b7b7b7;border-radius:5.5px 0 0 5.5px;"></div>
<svg class="b" style="left:0px;top:0px;pointer-events:none;" width="1500" height="844" viewBox="0 0 1500 844"><rect x="1462" y="116" width="2" height="2" fill="#a0a0a0"/><rect x="1468" y="116" width="2" height="2" fill="#a0a0a0"/><rect x="1474" y="116" width="2" height="2" fill="#a0a0a0"/><rect x="1480" y="116" width="2" height="2" fill="#a0a0a0"/><rect x="1486" y="116" width="2" height="2" fill="#a0a0a0"/><line x1="1457" y1="261.5" x2="1500" y2="261.5" stroke="#4a4a4a" stroke-width="1" stroke-dasharray="1 2"/><line x1="1457" y1="409.5" x2="1500" y2="409.5" stroke="#4a4a4a" stroke-width="1" stroke-dasharray="1 2"/></svg>
<!-- canvas -->
<svg class="b" style="left:95px;top:155px;" width="1043" height="577" viewBox="0 0 1043 577"><defs><pattern id="dots" x="21" y="8" width="10" height="10" patternUnits="userSpaceOnUse"><rect x="0" y="0" width="1" height="1" fill="#484848"/></pattern></defs><rect x="0" y="0" width="1043" height="577" fill="#000"/><line x1="21.5" y1="0" x2="21.5" y2="577" stroke="#1f1f1f" stroke-width="1"/><line x1="121.5" y1="0" x2="121.5" y2="577" stroke="#1f1f1f" stroke-width="1"/><line x1="221.5" y1="0" x2="221.5" y2="577" stroke="#1f1f1f" stroke-width="1"/><line x1="321.5" y1="0" x2="321.5" y2="577" stroke="#1f1f1f" stroke-width="1"/><line x1="421.5" y1="0" x2="421.5" y2="577" stroke="#1f1f1f" stroke-width="1"/><line x1="521.5" y1="0" x2="521.5" y2="577" stroke="#1f1f1f" stroke-width="1"/><line x1="621.5" y1="0" x2="621.5" y2="577" stroke="#1f1f1f" stroke-width="1"/><line x1="721.5" y1="0" x2="721.5" y2="577" stroke="#1f1f1f" stroke-width="1"/><line x1="821.5" y1="0" x2="821.5" y2="577" stroke="#1f1f1f" stroke-width="1"/><line x1="921.5" y1="0" x2="921.5" y2="577" stroke="#1f1f1f" stroke-width="1"/><line x1="1021.5" y1="0" x2="1021.5" y2="577" stroke="#1f1f1f" stroke-width="1"/><line x1="0" y1="78.5" x2="1043" y2="78.5" stroke="#1f1f1f" stroke-width="1"/><line x1="0" y1="178.5" x2="1043" y2="178.5" stroke="#1f1f1f" stroke-width="1"/><line x1="0" y1="278.5" x2="1043" y2="278.5" stroke="#1f1f1f" stroke-width="1"/><line x1="0" y1="378.5" x2="1043" y2="378.5" stroke="#1f1f1f" stroke-width="1"/><line x1="0" y1="478.5" x2="1043" y2="478.5" stroke="#1f1f1f" stroke-width="1"/><rect x="0" y="0" width="1043" height="577" fill="url(#dots)"/><line x1="21.5" y1="0" x2="21.5" y2="577" stroke="#5e5e5e" stroke-width="1" stroke-dasharray="1 9" stroke-dashoffset="-8"/><line x1="121.5" y1="0" x2="121.5" y2="577" stroke="#5e5e5e" stroke-width="1" stroke-dasharray="1 9" stroke-dashoffset="-8"/><line x1="221.5" y1="0" x2="221.5" y2="577" stroke="#5e5e5e" stroke-width="1" stroke-dasharray="1 9" stroke-dashoffset="-8"/><line x1="321.5" y1="0" x2="321.5" y2="577" stroke="#5e5e5e" stroke-width="1" stroke-dasharray="1 9" stroke-dashoffset="-8"/><line x1="421.5" y1="0" x2="421.5" y2="577" stroke="#5e5e5e" stroke-width="1" stroke-dasharray="1 9" stroke-dashoffset="-8"/><line x1="521.5" y1="0" x2="521.5" y2="577" stroke="#5e5e5e" stroke-width="1" stroke-dasharray="1 9" stroke-dashoffset="-8"/><line x1="621.5" y1="0" x2="621.5" y2="577" stroke="#5e5e5e" stroke-width="1" stroke-dasharray="1 9" stroke-dashoffset="-8"/><line x1="721.5" y1="0" x2="721.5" y2="577" stroke="#5e5e5e" stroke-width="1" stroke-dasharray="1 9" stroke-dashoffset="-8"/><line x1="821.5" y1="0" x2="821.5" y2="577" stroke="#5e5e5e" stroke-width="1" stroke-dasharray="1 9" stroke-dashoffset="-8"/><line x1="921.5" y1="0" x2="921.5" y2="577" stroke="#5e5e5e" stroke-width="1" stroke-dasharray="1 9" stroke-dashoffset="-8"/><line x1="1021.5" y1="0" x2="1021.5" y2="577" stroke="#5e5e5e" stroke-width="1" stroke-dasharray="1 9" stroke-dashoffset="-8"/><line x1="0" y1="78.5" x2="1043" y2="78.5" stroke="#5e5e5e" stroke-width="1" stroke-dasharray="1 9" stroke-dashoffset="-1"/><line x1="0" y1="178.5" x2="1043" y2="178.5" stroke="#5e5e5e" stroke-width="1" stroke-dasharray="1 9" stroke-dashoffset="-1"/><line x1="0" y1="278.5" x2="1043" y2="278.5" stroke="#5e5e5e" stroke-width="1" stroke-dasharray="1 9" stroke-dashoffset="-1"/><line x1="0" y1="378.5" x2="1043" y2="378.5" stroke="#5e5e5e" stroke-width="1" stroke-dasharray="1 9" stroke-dashoffset="-1"/><line x1="0" y1="478.5" x2="1043" y2="478.5" stroke="#5e5e5e" stroke-width="1" stroke-dasharray="1 9" stroke-dashoffset="-1"/><path d="M1.5 378.5 H41.5 M21.5 358.5 V398.5" stroke="#8e0000" stroke-width="1" fill="none"/><clipPath id="nofoot"><path clip-rule="evenodd" d="M-120 -40 H120 V12 H-120 Z M-89.91 -2.57 H-84.29 V0.6 H-89.91 Z M-81.85 -2.57 H-76.38 V0.6 H-81.85 Z"/></clipPath><g transform="translate(331.1 278.5) rotate(-90)"><text x="-91.26" y="0" clip-path="url(#nofoot)" font-size="27.7" fill="#9a4b48" stroke="#000" stroke-width="0.3" paint-order="fill stroke" style="font-family:'Liberation Sans', sans-serif">104.245.02.4B</text></g><line x1="166" y1="288.5" x2="942" y2="288.5" stroke="#ff0000" stroke-width="1.3" stroke-dasharray="17.5 6.5 2 7"/><line x1="221.5" y1="178.5" x2="221.5" y2="398.5" stroke="#ff0000" stroke-width="1.3" stroke-dasharray="17.5 6.5 2 7" stroke-dashoffset="13.5"/><line x1="821.5" y1="178.5" x2="821.5" y2="398.5" stroke="#ff0000" stroke-width="1.3" stroke-dasharray="17.5 6.5 2 7" stroke-dashoffset="13.5"/><rect x="121.5" y="198.5" width="800" height="180" fill="none" stroke="#fff" stroke-width="2.45"/><circle cx="221.5" cy="288.5" r="40" fill="none" stroke="#fff" stroke-width="2.45"/><circle cx="821.5" cy="288.5" r="40" fill="none" stroke="#fff" stroke-width="2.45"/><rect x="316.5" y="273.5" width="10" height="10" fill="#0000b2" stroke="#8a8ac8" stroke-width="1"/></svg>
<!-- toolbar icons -->
<svg class="b" style="left:0px;top:24px;font-family:'Liberation Sans',sans-serif;" width="1500" height="84" viewBox="0 24 1500 84"><defs>
<linearGradient id="gGreen" x1="0" y1="0" x2="0" y2="1"><stop offset="0" stop-color="#86d072"/><stop offset="0.55" stop-color="#48ad4e"/><stop offset="1" stop-color="#2c9a3f"/></linearGradient>
<linearGradient id="gLens" x1="0" y1="0" x2="0" y2="1"><stop offset="0" stop-color="#9bbcee"/><stop offset="0.5" stop-color="#6f9fe2"/><stop offset="0.52" stop-color="#5a90dc"/><stop offset="1" stop-color="#a6c6f0"/></linearGradient>
<linearGradient id="gPaper" x1="0" y1="0" x2="1" y2="1"><stop offset="0" stop-color="#ffffff"/><stop offset="1" stop-color="#dcdcdc"/></linearGradient>
<linearGradient id="gRed" x1="0" y1="0" x2="1" y2="1"><stop offset="0" stop-color="#e8473f"/><stop offset="1" stop-color="#b80c0c"/></linearGradient>
<linearGradient id="gPrn" x1="0" y1="0" x2="0" y2="1"><stop offset="0" stop-color="#f2f2f2"/><stop offset="1" stop-color="#b9b9b9"/></linearGradient>
</defs><path d="M27.40 35.80 L27.40 53.13 L31.47 49.28 L34.46 56.34 L37.35 55.06 L34.46 48.21 L39.81 48.21 Z" fill="#fff" stroke="#333" stroke-width="1.2" stroke-linejoin="miter"/><path d="M31.40 79.40 L31.40 94.47 L34.93 91.12 L37.54 97.26 L40.05 96.14 L37.54 90.19 L42.19 90.19 Z" fill="#fff" stroke="#555" stroke-width="1.1" stroke-linejoin="miter"/><rect x="246" y="33.5" width="27.5" height="25" rx="1.6" fill="#2f66e0" stroke="#2438a8" stroke-width="1"/><rect x="250" y="34.5" width="15" height="10" fill="#eef1fb"/><rect x="249.5" y="49" width="17" height="9" fill="#d9dbe6"/><rect x="263.5" y="50" width="4" height="8" fill="#3f7af0"/><path d="M259.6 50.6 L260.6 46.6 L273.6 33.0 L276.4 35.7 L263.4 49.3 Z" fill="#f7a92b" stroke="#b4471a" stroke-width="0.9"/><path d="M262.4 46.8 L274.6 34.2" stroke="#fde08a" stroke-width="1.3"/><path d="M273.2 32.6 L274.9 31.0 L277.9 33.8 L276.3 35.6 Z" fill="#e5533d" stroke="#a8321f" stroke-width="0.7"/><path d="M259.2 51 L260.2 47.4 L262.6 49.8 Z" fill="#f3d9b0" stroke="#7a4a20" stroke-width="0.5"/><path d="M306.1 49.6 Q306.1 45.2 310.2 45.2 H325.8 Q329.9 45.2 329.9 49.6 V54 Q329.9 58.1 325.8 58.1 H310.2 Q306.1 58.1 306.1 54 Z" fill="#000"/><g stroke="#000" stroke-width="4.6" stroke-linecap="round"><line x1="318" y1="45" x2="318" y2="36.4"/><line x1="318" y1="45" x2="311.6" y2="38.6"/><line x1="318" y1="45" x2="324.4" y2="38.6"/><line x1="318" y1="45" x2="308.9" y2="43"/><line x1="318" y1="45" x2="327.1" y2="43"/></g><g stroke="#ffb13b" stroke-width="1.9" stroke-linecap="round"><line x1="318" y1="45" x2="318" y2="36.4"/><line x1="318" y1="45" x2="311.6" y2="38.6"/><line x1="318" y1="45" x2="324.4" y2="38.6"/><line x1="318" y1="45" x2="308.9" y2="43"/><line x1="318" y1="45" x2="327.1" y2="43"/><line x1="308.4" y1="45.4" x2="327.6" y2="45.4" stroke-width="1.7" stroke-linecap="butt"/></g><g fill="#ffb13b"><circle cx="318" cy="36.4" r="1.45"/><circle cx="311.6" cy="38.6" r="1.45"/><circle cx="324.4" cy="38.6" r="1.45"/></g><text x="318.1" y="57" text-anchor="middle" font-size="14.2" font-weight="700" fill="#fff" textLength="19.4" lengthAdjust="spacingAndGlyphs">SVG</text><ellipse cx="374" cy="58" rx="13" ry="1.8" fill="#8c8c8c" opacity="0.5"/><rect x="366" y="32.2" width="17.5" height="13" rx="1" fill="#f1f1f1" stroke="#c2c2c2" stroke-width="0.8"/><rect x="375.6" y="34" width="6.2" height="6.4" fill="#d6d6d6"/><path d="M360.3 47 Q360.3 44.2 363.2 44.2 H385 Q387.8 44.2 387.8 47 V54.6 Q387.8 57 385 57 H363.2 Q360.3 57 360.3 54.6 Z" fill="url(#gPrn)" stroke="#a4a4a4" stroke-width="0.8"/><rect x="362" y="48.6" width="24" height="2.4" fill="#fbfbfb"/><line x1="373.6" y1="45.4" x2="380.4" y2="51.6" stroke="#a8a8a8" stroke-width="3.2" stroke-linecap="round"/><circle cx="369.4" cy="40.8" r="6.9" fill="#e6e6e4" stroke="#b4b8bc" stroke-width="0.7"/><circle cx="369.4" cy="40.8" r="5.3" fill="url(#gLens)" stroke="#5f8fd8" stroke-width="0.8"/><circle cx="368.2" cy="39.2" r="2.4" fill="#e9f1fb" opacity="0.7"/><path transform="translate(413 30)" d="M6.40 12.63 A12 12 0 1 1 14.30 27.70 Q18.8 26.3 21.85 22.37 A7.7 7.7 0 1 0 10.40 17.00 L14.80 21.80 L1.70 21.80 L1.70 7.50 Z" fill="url(#gGreen)" stroke="#23903a" stroke-width="1" stroke-linejoin="round"/><path transform="translate(491 30) scale(-1 1)" d="M6.40 12.63 A12 12 0 1 1 14.30 27.70 Q18.8 26.3 21.85 22.37 A7.7 7.7 0 1 0 10.40 17.00 L14.80 21.80 L1.70 21.80 L1.70 7.50 Z" fill="url(#gGreen)" stroke="#23903a" stroke-width="1" stroke-linejoin="round"/><ellipse cx="531" cy="57.2" rx="12" ry="1.6" fill="#fff" opacity="0.75"/><ellipse cx="526.5" cy="57" rx="6" ry="1.4" fill="#6e6e6e" opacity="0.6"/><g transform="translate(531.2 45.4) rotate(-45)"><rect x="-14.6" y="-4.6" width="29.2" height="9.2" rx="1.4" fill="url(#gRed)" stroke="#8e1010" stroke-width="0.7"/><rect x="-8.6" y="-1.6" width="23" height="3.2" fill="#fff"/><rect x="-14.6" y="-4.6" width="6.4" height="9.2" rx="1" fill="#fbfbfb" stroke="#9a8a8a" stroke-width="0.7"/><rect x="13.2" y="-4.6" width="1.4" height="9.2" fill="#555"/></g><g transform="translate(572.8 30.2) scale(1)"><path d="M13.6 16.4 L15.0 1.4 Q15.8 0.2 17.4 0.8 L17.6 15.8 Z" fill="#fafafa" stroke="#5e5e5e" stroke-width="0.8"/><path d="M15.8 15.0 L26.6 7.8 Q28.0 8.0 27.8 9.8 L17.2 17.6 Z" fill="#f6f6f6" stroke="#5e5e5e" stroke-width="0.8"/><ellipse cx="6.6" cy="17.6" rx="5.6" ry="3.2" transform="rotate(-18 6.6 17.6)" fill="none" stroke="#e3131b" stroke-width="2.3"/><ellipse cx="16.8" cy="24.2" rx="3.2" ry="5.6" transform="rotate(-8 16.8 24.2)" fill="none" stroke="#e3131b" stroke-width="2.3"/><path d="M11.2 15.6 Q14.4 15.2 16.2 18.6" fill="none" stroke="#e3131b" stroke-width="2.4"/><path d="M0.4 27.2 H6.8 M3.6 24 V30.4" stroke="#000" stroke-width="1.1" fill="none"/></g><g transform="translate(617.8 30) scale(1)"><rect x="0.6" y="0.6" width="20.6" height="24.4" rx="1.6" fill="#fbfbfb" stroke="#c9c9c9" stroke-width="0.9"/><g stroke="#d0d0d0" stroke-width="1"><line x1="4" y1="9" x2="9" y2="9"/><line x1="4" y1="12.6" x2="9" y2="12.6"/><line x1="4" y1="16.2" x2="9" y2="16.2"/></g><path d="M10.4 6.6 H28.4 Q29.9 6.6 29.9 8.1 V25.6 L24.4 31.2 H10.4 Q8.9 31.2 8.9 29.7 V8.1 Q8.9 6.6 10.4 6.6 Z" fill="url(#gPaper)" stroke="#b2b2b2" stroke-width="0.9"/><path d="M24.2 31.0 L24.6 26.2 L29.8 25.8 Z" fill="#bdbdbd" stroke="#9a9a9a" stroke-width="0.6"/><g stroke="#c4c4c4" stroke-width="1"><line x1="13" y1="13" x2="26.4" y2="13"/><line x1="13" y1="16" x2="26.4" y2="16"/><line x1="13" y1="19" x2="24.6" y2="19"/><line x1="13" y1="22" x2="26.4" y2="22"/></g><path d="M1.6 26.6 H8 M4.8 23.4 V29.8" stroke="#000" stroke-width="1.1" fill="none"/></g><g transform="translate(665.2 29.8) scale(1)"><rect x="0.9" y="3.6" width="25.6" height="26.8" rx="1.6" fill="#c98b2a" stroke="#9a6413" stroke-width="1"/><path d="M3.8 5.6 H23.6 V28 H3.8 Z" fill="url(#gPaper)" stroke="#a8a8a8" stroke-width="0.5"/><path d="M18.2 28 L18.6 23.4 L23.6 23 L23.6 28 Z" fill="#b9b9b9"/><g stroke="#c4c4c4" stroke-width="1"><line x1="7" y1="10.6" x2="20.6" y2="10.6"/><line x1="7" y1="13.4" x2="20.6" y2="13.4"/><line x1="7" y1="16.2" x2="18.6" y2="16.2"/><line x1="7" y1="19" x2="20.6" y2="19"/><line x1="7" y1="21.8" x2="15.6" y2="21.8"/></g><rect x="7" y="2.6" width="13.4" height="5" rx="1.6" fill="#9a9a92" stroke="#77776f" stroke-width="0.6"/><rect x="10" y="0.6" width="7.4" height="3" rx="1" fill="#8a8a82"/></g><line x1="723" y1="56.6" x2="745.4" y2="56.6" stroke="#f00" stroke-width="1.2"/><g transform="translate(725.2 54.6) rotate(-46)"><path d="M0 0 L5.2 -3.2 H24 Q26.2 -3.2 26.2 0 Q26.2 3.2 24 3.2 H5.2 Z" fill="#e2261c" stroke="#7a5a1c" stroke-width="0.9" stroke-linejoin="round"/><path d="M0 0 L5.2 -3.2 V3.2 Z" fill="#f1d0a0" stroke="#7a5a1c" stroke-width="0.7"/><path d="M0 0 L2 -1.2 V1.2 Z" fill="#222"/><rect x="19.4" y="-3.2" width="2.6" height="6.4" fill="#d9d9d9"/><line x1="6" y1="-1.2" x2="19" y2="-1.2" stroke="#ff8a7a" stroke-width="1.2"/></g><rect x="765.8" y="35.8" width="28.6" height="21.6" rx="1" fill="#000080" stroke="#11113a" stroke-width="1.2"/><path d="M769.6 53.8 L790.6 39.6" stroke="#fff" stroke-width="1.1" stroke-dasharray="3.2 1.2" fill="none"/><path d="M790.6 39.6 V53.8 H769.6" stroke="#e6e6ff" stroke-width="1.1" stroke-dasharray="2 1.4" fill="none"/><circle cx="826.2" cy="45.9" r="13" fill="none" stroke="#000" stroke-width="2.1"/><path d="M813.4 49.4 A13 13 0 0 1 822.6 33.4" fill="none" stroke="#b9b9b9" stroke-width="2.6" stroke-dasharray="1.4 2.6"/><line x1="812.2" y1="59.8" x2="840" y2="32" stroke="#1414ff" stroke-width="1.1"/><rect x="870" y="33" width="2" height="2" fill="#000"/><rect x="870" y="41" width="2" height="2" fill="#000"/><rect x="870" y="49" width="2" height="2" fill="#000"/><rect x="870" y="57" width="2" height="2" fill="#000"/><rect x="878" y="33" width="2" height="2" fill="#000"/><rect x="878" y="41" width="2" height="2" fill="#000"/><rect x="878" y="49" width="2" height="2" fill="#000"/><rect x="878" y="57" width="2" height="2" fill="#000"/><rect x="886" y="33" width="2" height="2" fill="#000"/><rect x="886" y="41" width="2" height="2" fill="#000"/><rect x="886" y="49" width="2" height="2" fill="#000"/><rect x="886" y="57" width="2" height="2" fill="#000"/><rect x="894" y="33" width="2" height="2" fill="#000"/><rect x="894" y="41" width="2" height="2" fill="#000"/><rect x="894" y="49" width="2" height="2" fill="#000"/><rect x="894" y="57" width="2" height="2" fill="#000"/><ellipse cx="939.2" cy="59.3" rx="11" ry="1.4" fill="#9a9a9a" opacity="0.22"/><line x1="945.8" y1="51.7" x2="951.8" y2="57.5" stroke="#62625e" stroke-width="4.2" stroke-linecap="round"/><line x1="945.8" y1="50.7" x2="952.4" y2="56.9" stroke="#9a9a94" stroke-width="1.3" stroke-linecap="round"/><circle cx="936.2" cy="42.1" r="11.3" fill="#e9e9e4" stroke="#a3a39c" stroke-width="0.8"/><circle cx="936.2" cy="42.1" r="9.2" fill="url(#gLens)" stroke="#b9c4d4" stroke-width="0.6"/><path d="M930.4 40.6 H934.7 V36.3 H937.7 V40.6 H942 V43.6 H937.7 V47.9 H934.7 V43.6 H930.4 Z" fill="#fff" stroke="#3d73c6" stroke-width="0.5"/><ellipse cx="985.2" cy="59.3" rx="11" ry="1.4" fill="#9a9a9a" opacity="0.22"/><line x1="991.8" y1="51.7" x2="997.8" y2="57.5" stroke="#62625e" stroke-width="4.2" stroke-linecap="round"/><line x1="991.8" y1="50.7" x2="998.4" y2="56.9" stroke="#9a9a94" stroke-width="1.3" stroke-linecap="round"/><circle cx="982.2" cy="42.1" r="11.3" fill="#e9e9e4" stroke="#a3a39c" stroke-width="0.8"/><circle cx="982.2" cy="42.1" r="9.2" fill="url(#gLens)" stroke="#b9c4d4" stroke-width="0.6"/><rect x="976.4" y="40.6" width="11.6" height="3" fill="#fff" stroke="#3d73c6" stroke-width="0.5"/><ellipse cx="1031.2" cy="59.3" rx="11" ry="1.4" fill="#9a9a9a" opacity="0.22"/><line x1="1037.8" y1="51.7" x2="1043.8" y2="57.5" stroke="#62625e" stroke-width="4.2" stroke-linecap="round"/><line x1="1037.8" y1="50.7" x2="1044.4" y2="56.9" stroke="#9a9a94" stroke-width="1.3" stroke-linecap="round"/><circle cx="1028.2" cy="42.1" r="11.3" fill="#e9e9e4" stroke="#a3a39c" stroke-width="0.8"/><circle cx="1028.2" cy="42.1" r="9.2" fill="url(#gLens)" stroke="#b9c4d4" stroke-width="0.6"/><path d="M1022 35.9 H1026 V37.9 H1024 V39.9 H1022 Z" fill="#fff" stroke="#3d73c6" stroke-width="0.4"/><path d="M1022 48.3 H1026 V46.3 H1024 V44.3 H1022 Z" fill="#fff" stroke="#3d73c6" stroke-width="0.4"/><path d="M1034.4 35.9 H1030.4 V37.9 H1032.4 V39.9 H1034.4 Z" fill="#fff" stroke="#3d73c6" stroke-width="0.4"/><path d="M1034.4 48.3 H1030.4 V46.3 H1032.4 V44.3 H1034.4 Z" fill="#fff" stroke="#3d73c6" stroke-width="0.4"/><rect x="1025" y="38.9" width="6.4" height="6.4" fill="#a9c6ef" opacity="0.9"/><ellipse cx="1077.2" cy="59.3" rx="11" ry="1.4" fill="#9a9a9a" opacity="0.22"/><line x1="1083.8" y1="51.7" x2="1089.8" y2="57.5" stroke="#62625e" stroke-width="4.2" stroke-linecap="round"/><line x1="1083.8" y1="50.7" x2="1090.4" y2="56.9" stroke="#9a9a94" stroke-width="1.3" stroke-linecap="round"/><circle cx="1074.2" cy="42.1" r="11.3" fill="#e9e9e4" stroke="#a3a39c" stroke-width="0.8"/><circle cx="1074.2" cy="42.1" r="9.2" fill="url(#gLens)" stroke="#b9c4d4" stroke-width="0.6"/><path d="M1068 35.9 H1072 V37.9 H1070 V39.9 H1068 Z" fill="#f00" stroke="#c00" stroke-width="0.4"/><path d="M1068 48.3 H1072 V46.3 H1070 V44.3 H1068 Z" fill="#f00" stroke="#c00" stroke-width="0.4"/><path d="M1080.4 35.9 H1076.4 V37.9 H1078.4 V39.9 H1080.4 Z" fill="#f00" stroke="#c00" stroke-width="0.4"/><path d="M1080.4 48.3 H1076.4 V46.3 H1078.4 V44.3 H1080.4 Z" fill="#f00" stroke="#c00" stroke-width="0.4"/><rect x="1071" y="38.9" width="6.4" height="6.4" fill="#a9c6ef" opacity="0.9"/><ellipse cx="1123.2" cy="59.3" rx="11" ry="1.4" fill="#9a9a9a" opacity="0.22"/><line x1="1129.8" y1="51.7" x2="1135.8" y2="57.5" stroke="#62625e" stroke-width="4.2" stroke-linecap="round"/><line x1="1129.8" y1="50.7" x2="1136.4" y2="56.9" stroke="#9a9a94" stroke-width="1.3" stroke-linecap="round"/><circle cx="1120.2" cy="42.1" r="11.3" fill="#e9e9e4" stroke="#a3a39c" stroke-width="0.8"/><circle cx="1120.2" cy="42.1" r="9.2" fill="url(#gLens)" stroke="#b9c4d4" stroke-width="0.6"/><path d="M1112.6 42.1 L1119.4 36.4 V39.8 H1127 V44.4 H1119.4 V47.8 Z" fill="#fff" stroke="#3d73c6" stroke-width="0.5"/><rect x="1154.6" y="30.6" width="27" height="17.6" rx="1" fill="#fdfdfd" stroke="#5f8fd8" stroke-width="0.9"/><ellipse cx="1171" cy="59.3" rx="10" ry="1.5" fill="#9a9a9a" opacity="0.35"/><line x1="1176.4" y1="52.6" x2="1181.8" y2="57.8" stroke="#62625e" stroke-width="4" stroke-linecap="round"/><circle cx="1168.4" cy="44.6" r="10.2" fill="#e9e9e4" stroke="#a3a39c" stroke-width="0.8"/><circle cx="1168.4" cy="44.6" r="8.2" fill="url(#gLens)"/><ellipse cx="1216" cy="59.3" rx="11" ry="1.6" fill="#9a9a9a" opacity="0.35"/><line x1="1222.4" y1="51.8" x2="1229.6" y2="58.6" stroke="#62625e" stroke-width="4" stroke-linecap="round"/><circle cx="1212.9" cy="43.1" r="11.3" fill="#e9e9e4" stroke="#a3a39c" stroke-width="0.8"/><circle cx="1212.9" cy="43.1" r="9.2" fill="url(#gLens)"/><path d="M1212.9 30.2 L1216.6 35.2 H1214.3 V41.7 H1220.8 V39.4 L1225.8 43.1 L1220.8 46.8 V44.5 H1214.3 V51 H1216.6 L1212.9 56 L1209.2 51 H1211.5 V44.5 H1205 V46.8 L1200 43.1 L1205 39.4 V41.7 H1211.5 V35.2 H1209.2 Z" fill="#fff" stroke="#3d73c6" stroke-width="0.8" stroke-linejoin="round"/></svg>
<!-- left tool icons -->
<svg class="b" style="left:0px;top:108px;" width="41" height="400" viewBox="0 108 41 400"><path d="M8.3 131.8 H14.7 M11.5 128.6 V135" stroke="#000" stroke-width="1.1" fill="none"/><path d="M22.3 140.4 H28.7 M25.5 137.2 V143.6" stroke="#000" stroke-width="1.1" fill="none"/><path d="M9.1 146.8 H15.5 M12.3 143.6 V150" stroke="#000" stroke-width="1.1" fill="none"/><path d="M31 147 V152.2 H25.8 Z" fill="#000"/><path d="M7.8 183 C8.6 172.6 16 164.6 27.6 163.6" fill="none" stroke="#2b2b2b" stroke-width="1.3" stroke-linecap="round"/><path d="M31 182 V187.2 H25.8 Z" fill="#000"/><ellipse cx="18" cy="209.2" rx="13.4" ry="5.6" transform="rotate(-41 18 209.2)" fill="none" stroke="#2b2b2b" stroke-width="1.3"/><path d="M31 217 V222.2 H25.8 Z" fill="#000"/><path d="M14 239 A4.6 4.6 0 1 0 12.6 248 H27.8" fill="none" stroke="#2b2b2b" stroke-width="1.3" stroke-linecap="round"/><path d="M31 252 V257.2 H25.8 Z" fill="#000"/><defs><pattern id="hatch" width="2.6" height="2.6" patternUnits="userSpaceOnUse" patternTransform="rotate(-45)"><rect width="2.6" height="2.6" fill="#f4f4f4"/><line x1="0" y1="1.3" x2="2.6" y2="1.3" stroke="#444" stroke-width="0.8"/></pattern></defs><path d="M7.8 286.4 V278.2 L14.6 272.4 H28.4 V286.4 Z" fill="url(#hatch)" stroke="#2b2b2b" stroke-width="1.1"/><circle cx="20.4" cy="280" r="3" fill="#fafafa" stroke="#2b2b2b" stroke-width="1"/><path d="M31 287 V292.2 H25.8 Z" fill="#000"/><text x="18" y="331.8" text-anchor="middle" font-size="29.5" fill="#000" style="font-family:'Liberation Serif',serif">A</text><rect x="6.9" y="348.4" width="22" height="16.8" fill="#fff" stroke="#2e2e2e" stroke-width="1.1"/><rect x="8.3" y="349.8" width="19.2" height="14" fill="none" stroke="#8a8a8a" stroke-width="0.6"/><path d="M9.8 362.2 V358.6 L13.6 355.4 L16.4 357.8 L20.6 354 L26 359 V362.2 Z" fill="#000"/><circle cx="24.4" cy="352.6" r="1.7" fill="#000"/><path d="M5.6 393.4 V411.6 H24.4 Z" fill="#fff" stroke="#222" stroke-width="1.2" stroke-linejoin="miter"/><path d="M9.6 402.6 V407.8 H15 Z" fill="#fff" stroke="#222" stroke-width="1"/><g transform="translate(19.2 397.6) rotate(-135)"><path d="M0 0 L3.2 -2.1 H11.4 Q12.8 -2.1 12.8 0 Q12.8 2.1 11.4 2.1 H3.2 Z" fill="#e2261c" stroke="#8a3a1c" stroke-width="0.7"/><path d="M0 0 L3.2 -2.1 V2.1 Z" fill="#f1d0a0" stroke="#7a5a1c" stroke-width="0.5"/></g><path d="M26.4 388.6 V392 M26.4 392 L23.6 408.4 M26.4 392 L29.2 408.4" stroke="#222" stroke-width="1.2" fill="none" stroke-linecap="round"/><circle cx="26.4" cy="391.6" r="1.4" fill="#fff" stroke="#222" stroke-width="0.8"/><path d="M31 407.4 V412.6 H25.8 Z" fill="#000"/><rect x="7.6" y="425.6" width="17" height="12.4" fill="#fdf3c8" stroke="#333" stroke-width="1.1"/><circle cx="21.9" cy="437" r="6.8" fill="#fdf3c8" fill-opacity="0.85" stroke="#333" stroke-width="1.1"/><path d="M24.6 431 V438 H15.2" fill="none" stroke="#333" stroke-width="1.1"/><circle cx="7.8" cy="438.2" r="1.6" fill="#ff2a2a"/><path d="M19.5 467.3 L28.4 472.5 V481.8 L16 488.3 L7.7 483.5 V474.6 Z M7.7 474.6 L16 478.8 L28.4 472.5 M16 478.8 V488.3" fill="none" stroke="#333" stroke-width="1.3" stroke-linejoin="round"/><path d="M31 486.4 V491.6 H25.8 Z" fill="#000"/></svg>
<!-- layer panel icons -->
<svg class="b" style="left:1155px;top:108px;" width="300" height="140" viewBox="1155 108 300 140"><circle cx="1164" cy="118" r="6.9" fill="#6d6d6d"/><path d="M1161.1 115.1 L1166.9 120.9 M1166.9 115.1 L1161.1 120.9" stroke="#f4f4f4" stroke-width="2.2" stroke-linecap="round"/><circle cx="1182" cy="118" r="6.9" fill="#6d6d6d"/><rect x="1180.8" y="114.9" width="5" height="4.2" fill="none" stroke="#f4f4f4" stroke-width="1.2"/><rect x="1178.2" y="117.1" width="5" height="4.2" fill="#6d6d6d" stroke="#f4f4f4" stroke-width="1.2"/><g transform="translate(1185.2 142.8) scale(0.92)"><path d="M-7.6 0.6 C-4.8 -6.0 4.8 -6.0 7.6 0.6 C4.8 6.0 -4.8 6.0 -7.6 0.6 Z" fill="#fff" stroke="#000" stroke-width="1.5" stroke-linejoin="round"/><path d="M-7.6 0.2 C-4.6 -6.6 4.6 -6.6 7.6 0.2" fill="none" stroke="#000" stroke-width="2.7" stroke-linecap="round"/><circle cx="0.2" cy="0.3" r="3.9" fill="#000"/><circle cx="-1.2" cy="-1.3" r="1.0" fill="#fff" opacity="0.8"/></g><g transform="translate(1245 142.8) scale(0.92)"><path d="M-7.6 0.6 C-4.8 -6.0 4.8 -6.0 7.6 0.6 C4.8 6.0 -4.8 6.0 -7.6 0.6 Z" fill="#fff" stroke="#a8a8a8" stroke-width="1.5" stroke-linejoin="round"/><path d="M-7.6 0.2 C-4.6 -6.6 4.6 -6.6 7.6 0.2" fill="none" stroke="#a8a8a8" stroke-width="2.7" stroke-linecap="round"/><circle cx="0.2" cy="0.3" r="3.9" fill="#a8a8a8"/><circle cx="-1.2" cy="-1.3" r="1.0" fill="#fff" opacity="0.8"/></g><path d="M1299 143 H1310.4 M1304.7 137.3 V148.7" stroke="#e00000" stroke-width="3" fill="none"/><path d="M1359.2 143 H1370.6" stroke="#e00000" stroke-width="3" fill="none"/><g transform="translate(1424.6 143) scale(1) rotate(-50)"><path d="M-9.4 0 L-5.6 -1.9 H6.6 V1.9 H-5.6 Z" fill="#e3a53a" stroke="#a8741e" stroke-width="0.6"/><path d="M-9.4 0 L-5.6 -1.9 V1.9 Z" fill="#f0d7ae"/><path d="M-9.4 0 L-7.8 -0.8 V0.8 Z" fill="#333"/><rect x="6.6" y="-1.9" width="2.8" height="3.8" rx="0.6" fill="#e23b2e"/></g><g transform="translate(1423.2 166.7) scale(0.88)"><path d="M-7.6 0.6 C-4.8 -6.0 4.8 -6.0 7.6 0.6 C4.8 6.0 -4.8 6.0 -7.6 0.6 Z" fill="#fff" stroke="#000" stroke-width="1.5" stroke-linejoin="round"/><path d="M-7.6 0.2 C-4.6 -6.6 4.6 -6.6 7.6 0.2" fill="none" stroke="#000" stroke-width="2.7" stroke-linecap="round"/><circle cx="0.2" cy="0.3" r="3.9" fill="#000"/><circle cx="-1.2" cy="-1.3" r="1.0" fill="#fff" opacity="0.8"/></g><path d="M1441.5 167.1 V163.9 A3.3 3.6 0 0 1 1448.1 163.9 V167.1" fill="none" stroke="#bdbdbd" stroke-width="1.5"/><rect x="1439.8" y="166.9" width="10" height="8" fill="#b8b8b8"/><g transform="translate(1423.2 186.7) scale(0.88)"><path d="M-7.6 0.6 C-4.8 -6.0 4.8 -6.0 7.6 0.6 C4.8 6.0 -4.8 6.0 -7.6 0.6 Z" fill="#fff" stroke="#000" stroke-width="1.5" stroke-linejoin="round"/><path d="M-7.6 0.2 C-4.6 -6.6 4.6 -6.6 7.6 0.2" fill="none" stroke="#000" stroke-width="2.7" stroke-linecap="round"/><circle cx="0.2" cy="0.3" r="3.9" fill="#000"/><circle cx="-1.2" cy="-1.3" r="1.0" fill="#fff" opacity="0.8"/></g><path d="M1441.5 187.1 V183.9 A3.3 3.6 0 0 1 1448.1 183.9 V187.1" fill="none" stroke="#bdbdbd" stroke-width="1.5"/><rect x="1439.8" y="186.9" width="10" height="8" fill="#b8b8b8"/><g transform="translate(1423.2 206.7) scale(0.88)"><path d="M-7.6 0.6 C-4.8 -6.0 4.8 -6.0 7.6 0.6 C4.8 6.0 -4.8 6.0 -7.6 0.6 Z" fill="#fff" stroke="#000" stroke-width="1.5" stroke-linejoin="round"/><path d="M-7.6 0.2 C-4.6 -6.6 4.6 -6.6 7.6 0.2" fill="none" stroke="#000" stroke-width="2.7" stroke-linecap="round"/><circle cx="0.2" cy="0.3" r="3.9" fill="#000"/><circle cx="-1.2" cy="-1.3" r="1.0" fill="#fff" opacity="0.8"/></g><path d="M1441.5 207.1 V203.9 A3.3 3.6 0 0 1 1448.1 203.9 V207.1" fill="none" stroke="#bdbdbd" stroke-width="1.5"/><rect x="1439.8" y="206.9" width="10" height="8" fill="#b8b8b8"/><g transform="translate(1423.2 226.7) scale(0.88)"><path d="M-7.6 0.6 C-4.8 -6.0 4.8 -6.0 7.6 0.6 C4.8 6.0 -4.8 6.0 -7.6 0.6 Z" fill="#fff" stroke="#000" stroke-width="1.5" stroke-linejoin="round"/><path d="M-7.6 0.2 C-4.6 -6.6 4.6 -6.6 7.6 0.2" fill="none" stroke="#000" stroke-width="2.7" stroke-linecap="round"/><circle cx="0.2" cy="0.3" r="3.9" fill="#000"/><circle cx="-1.2" cy="-1.3" r="1.0" fill="#fff" opacity="0.8"/></g><path d="M1441.5 227.1 V223.9 A3.3 3.6 0 0 1 1448.1 223.9 V227.1" fill="none" stroke="#bdbdbd" stroke-width="1.5"/><rect x="1439.8" y="226.9" width="10" height="8" fill="#b8b8b8"/><g transform="translate(1401 227.2) scale(0.95) rotate(-50)"><path d="M-9.4 0 L-5.6 -1.9 H6.6 V1.9 H-5.6 Z" fill="#e3a53a" stroke="#a8741e" stroke-width="0.6"/><path d="M-9.4 0 L-5.6 -1.9 V1.9 Z" fill="#f0d7ae"/><path d="M-9.4 0 L-7.8 -0.8 V0.8 Z" fill="#333"/><rect x="6.6" y="-1.9" width="2.8" height="3.8" rx="0.6" fill="#e23b2e"/></g></svg>
<!-- right strip icons -->
<svg class="b" style="left:1455px;top:120px;" width="45" height="390" viewBox="1455 120 45 390"><rect x="1463.2" y="127.2" width="27.6" height="27.6" fill="#fff" stroke="#222" stroke-width="0.9"/><rect x="1463" y="127" width="28" height="4.6" fill="#000"/><rect x="1463.6" y="127.6" width="3.2" height="3.2" fill="#fff" stroke="#000" stroke-width="0.6"/><g transform="translate(1463 127)"><path d="M8.4 12.4 L10.4 11.4 V20.6 L8.4 21.6 Z" fill="#888" stroke="#333" stroke-width="0.5"/><path d="M10.4 11.4 L18.6 8.6 V18.2 L10.4 21 Z" fill="#ddd" stroke="#444" stroke-width="0.6"/><path d="M12.6 11.8 L20.6 9 V18.6 L12.6 21.4 Z" fill="#fff" stroke="#444" stroke-width="0.6"/><path d="M14.6 19.4 L19 11.6 V18 Z" fill="none" stroke="#e33" stroke-width="0.8"/></g><rect x="1463.2" y="174.2" width="27.6" height="27.6" fill="#fff" stroke="#222" stroke-width="0.9"/><rect x="1463" y="174" width="28" height="4.6" fill="#000"/><rect x="1463.6" y="174.6" width="3.2" height="3.2" fill="#fff" stroke="#000" stroke-width="0.6"/><g transform="translate(1463 174)"><rect x="7.6" y="10.2" width="9.6" height="7.4" fill="#fdf3c8" stroke="#555" stroke-width="0.8"/><circle cx="15.6" cy="17" r="4.2" fill="#fdf3c8" fill-opacity="0.9" stroke="#555" stroke-width="0.8"/></g><rect x="1463.2" y="220.2" width="27.6" height="27.6" fill="#fff" stroke="#222" stroke-width="0.9"/><rect x="1463" y="220" width="28" height="4.6" fill="#000"/><rect x="1463.6" y="220.6" width="3.2" height="3.2" fill="#fff" stroke="#000" stroke-width="0.6"/><g transform="translate(1463 220)"><rect x="5.6" y="10.4" width="16.6" height="11.2" rx="2.4" fill="#f3f3f1" stroke="#bccbe6" stroke-width="1"/></g><rect x="1463.2" y="276.2" width="27.6" height="27.6" fill="#fff" stroke="#222" stroke-width="0.9"/><rect x="1463" y="276" width="28" height="4.6" fill="#000"/><rect x="1463.6" y="276.6" width="3.2" height="3.2" fill="#fff" stroke="#000" stroke-width="0.6"/><g transform="translate(1463 276)"><rect x="3.4" y="8.6" width="4.4" height="3" rx="0.8" fill="#000"/><rect x="10.4" y="8.6" width="13.6" height="3" fill="#fff" stroke="#333" stroke-width="0.7"/><rect x="3.4" y="14.4" width="4.4" height="3" rx="0.8" fill="#000"/><rect x="10.4" y="14.4" width="13.6" height="3" fill="#fff" stroke="#333" stroke-width="0.7"/><rect x="3.4" y="20.2" width="4.4" height="3" rx="0.8" fill="#000"/><rect x="10.4" y="20.2" width="13.6" height="3" fill="#fff" stroke="#333" stroke-width="0.7"/></g><rect x="1463.2" y="322.2" width="27.6" height="27.6" fill="#fff" stroke="#222" stroke-width="0.9"/><rect x="1463" y="322" width="28" height="4.6" fill="#000"/><rect x="1463.6" y="322.6" width="3.2" height="3.2" fill="#fff" stroke="#000" stroke-width="0.6"/><g transform="translate(1463 322)"><path d="M7 9.6 H21 L15.4 15.4 V22.4 L12.6 20.8 V15.4 Z" fill="#b0b0b0" stroke="#555" stroke-width="0.7" stroke-linejoin="round"/><ellipse cx="14" cy="9.6" rx="7" ry="1.6" fill="#d8d8d8" stroke="#666" stroke-width="0.6"/></g><rect x="1463.2" y="368.2" width="27.6" height="27.6" fill="#fff" stroke="#222" stroke-width="0.9"/><rect x="1463" y="368" width="28" height="4.6" fill="#000"/><rect x="1463.6" y="368.6" width="3.2" height="3.2" fill="#fff" stroke="#000" stroke-width="0.6"/><g transform="translate(1463 368)"><line x1="4" y1="15.6" x2="24" y2="15.6" stroke="#f2a0a0" stroke-width="0.8" stroke-dasharray="2.4 1"/><path d="M6.4 10 L11 13 V18.2 L6.4 21.2 Z" fill="#fff" stroke="#333" stroke-width="0.8"/><rect x="11" y="12.6" width="10.4" height="6" rx="1.2" fill="#8c8c8c" stroke="#444" stroke-width="0.6"/><rect x="13.4" y="12.6" width="5.6" height="6" fill="#b4b4b4" opacity="0.7"/></g><rect x="1463.2" y="424.2" width="27.6" height="27.6" fill="#fff" stroke="#222" stroke-width="0.9"/><rect x="1463" y="424" width="28" height="4.6" fill="#000"/><rect x="1463.6" y="424.6" width="3.2" height="3.2" fill="#fff" stroke="#000" stroke-width="0.6"/><g transform="translate(1463 424)"><g stroke="#8a8a8a" stroke-width="0.75" stroke-dasharray="3.6 0.7 2 0.7 1.6 0.7"><line x1="3.2" y1="9.6" x2="16.6" y2="9.6"/><line x1="3.2" y1="12.8" x2="15.2" y2="12.8"/><line x1="3.2" y1="16" x2="19.6" y2="16"/><line x1="3.2" y1="19.2" x2="21" y2="19.2"/></g><text x="12" y="25.9" font-size="3.4" fill="#222" style="font-family:'Liberation Sans',sans-serif">command</text><line x1="0.4" y1="22.2" x2="27.6" y2="22.2" stroke="#333" stroke-width="0.6"/><path d="M3.4 23.6 L5 25 L3.4 26.4" fill="none" stroke="#333" stroke-width="0.5"/></g><rect x="1463.2" y="471.2" width="27.6" height="27.6" fill="#fff" stroke="#222" stroke-width="0.9"/><rect x="1463" y="471" width="28" height="4.6" fill="#000"/><rect x="1463.6" y="471.6" width="3.2" height="3.2" fill="#fff" stroke="#000" stroke-width="0.6"/><g transform="translate(1463 471)"><g transform="translate(7.4 7.4) scale(0.52)"><rect x="0.9" y="3.6" width="25.6" height="26.8" rx="1.6" fill="#c98b2a" stroke="#9a6413" stroke-width="1"/><path d="M3.8 5.6 H23.6 V28 H3.8 Z" fill="#f4f4f4" stroke="#a8a8a8" stroke-width="0.5"/><g stroke="#c4c4c4" stroke-width="1.2"><line x1="7" y1="11" x2="20.6" y2="11"/><line x1="7" y1="15" x2="20.6" y2="15"/><line x1="7" y1="19" x2="18.6" y2="19"/></g><path d="M18.2 28 L18.6 23.4 L23.6 23 L23.6 28 Z" fill="#b9b9b9"/><rect x="7" y="2.6" width="13.4" height="5" rx="1.6" fill="#9a9a92" stroke="#77776f" stroke-width="0.6"/><rect x="10" y="0.6" width="7.4" height="3" rx="1" fill="#8a8a82"/></g></g></svg>
<svg class="b" style="left:716px;top:805px;" width="21" height="33" viewBox="0 0 21 33"><path d="M1.7 11.6 C1.7 4.8 5.4 1.4 10.4 1.4 C15.4 1.4 19.1 4.8 19.1 11.6 V22 C19.1 28 15.4 31.4 10.4 31.4 C5.4 31.4 1.7 28 1.7 22 Z" fill="#fff" stroke="#222" stroke-width="1"/><path d="M1.7 14.2 C5 12.2 8 12 10.4 12 C12.8 12 15.8 12.2 19.1 14.2" fill="none" stroke="#222" stroke-width="0.9"/><line x1="10.4" y1="1.6" x2="10.4" y2="12" stroke="#222" stroke-width="0.8"/><rect x="9" y="3.6" width="2.8" height="6.4" rx="1.4" fill="#fff" stroke="#222" stroke-width="0.8"/></svg>
<!-- edit menu -->
<div class="b menu" style="left:41px;top:30px;width:218px;height:471.5px;background:#ececec;border-radius:5.5px;box-shadow:0 0 0 0.5px rgba(0,0,0,0.04);overflow:hidden;"><div class="b" style="left:0px;top:88px;width:218px;height:19.6px;background:#f0c8c8;"></div><div class="b" style="left:0px;top:49px;width:218px;height:2px;background:#d2d2d2;"></div><div class="b" style="left:0px;top:81px;width:218px;height:2px;background:#d2d2d2;"></div><div class="b" style="left:0px;top:233px;width:218px;height:2px;background:#d2d2d2;"></div><div class="b" style="left:0px;top:265px;width:218px;height:2px;background:#d2d2d2;"></div><div class="b" style="left:0px;top:337px;width:218px;height:2px;background:#d2d2d2;"></div><div class="b" style="left:0px;top:369px;width:218px;height:2px;background:#d2d2d2;"></div><div class="b" style="left:0px;top:421px;width:218px;height:2px;background:#d2d2d2;"></div><span class="t hv" style="left:39.70px;top:13.00px;font-size:13px;letter-spacing:0.259px;color:#242424;">Undo [Paste (PS)] (OO)</span><span class="t hv" style="left:39.63px;top:33.00px;font-size:13px;letter-spacing:0.474px;color:#242424;">Redo [-] (UU)</span><span class="t hv" style="left:39.63px;top:65.00px;font-size:13px;letter-spacing:0.087px;color:#242424;">Delete (ER)</span><span class="t hv" style="left:40.04px;top:97.00px;font-size:13px;letter-spacing:0.463px;color:#242424;">Cut</span><span class="t hv" style="left:40.04px;top:117.00px;font-size:13px;letter-spacing:0.223px;color:#242424;">Cut with Reference (RT)</span><span class="t hv" style="left:40.04px;top:137.00px;font-size:13px;letter-spacing:0.186px;color:#242424;">Copy (CP)</span><span class="t hv" style="left:40.04px;top:157.00px;font-size:13px;letter-spacing:0.194px;color:#242424;">Copy with Reference (RC)</span><span class="t hv" style="left:39.63px;top:177.00px;font-size:13px;letter-spacing:0.058px;color:#242424;">Paste (PS)</span><span class="t hv" style="left:39.63px;top:197.00px;font-size:13px;letter-spacing:0.167px;color:#242424;">Paste along Entity (PE)</span><span class="t hv" style="left:39.63px;top:217.00px;font-size:13px;letter-spacing:0.304px;color:#242424;">Duplicate (DP)</span><span class="t hv" style="left:40.08px;top:249.00px;font-size:13px;letter-spacing:0.392px;color:#242424;">Quick Modify</span><span class="t hv" style="left:39.63px;top:281.00px;font-size:13px;letter-spacing:0.090px;color:#242424;">Find/Replace (RP)</span><span class="t hv" style="left:40.11px;top:301.00px;font-size:13px;letter-spacing:0.260px;color:#242424;">Substitute Fonts (FF)</span><span class="t hv" style="left:40.11px;top:321.00px;font-size:13px;letter-spacing:0.186px;color:#242424;">Scale Text Heights (MG)</span><span class="t hv" style="left:40.04px;top:353.00px;font-size:13px;letter-spacing:0.274px;color:#242424;">Convert Drawing Unit (CU)</span><span class="t hv" style="left:39.63px;top:385.00px;font-size:13px;letter-spacing:0.237px;color:#242424;">Escape</span><span class="t hv" style="left:39.63px;top:405.00px;font-size:13px;letter-spacing:0.164px;color:#242424;">Reset / Idle (QQ)</span><span class="t hv" style="left:39.63px;top:437.00px;font-size:13px;letter-spacing:0.269px;color:#242424;">Drawing Preferences</span><span class="t hv" style="left:40.67px;top:457.00px;font-size:13px;letter-spacing:0.295px;color:#242424;">Application Preferences</span><svg class="b" style="left:197.5px;top:244.5px;" width="9" height="10" viewBox="0 0 9 10"><path d="M0.3 0.3 L8.6 5 L0.3 9.7 Z" fill="#2a2a2a"/></svg><svg class="b" style="left:3px;top:402px;" width="12" height="12" viewBox="0 0 12 12"><path d="M1 7.2 L4.2 10.8 L11 1.2" fill="none" stroke="#222" stroke-width="1.5" stroke-linecap="round" stroke-linejoin="round"/></svg><svg class="b" style="left:0;top:0;" width="218" height="471.5" viewBox="41 30 218 471.5"><defs>
<linearGradient id="mGreen" x1="0" y1="0" x2="0" y2="1"><stop offset="0" stop-color="#86d072"/><stop offset="0.55" stop-color="#48ad4e"/><stop offset="1" stop-color="#2c9a3f"/></linearGradient>
<linearGradient id="mLens" x1="0" y1="0" x2="0" y2="1"><stop offset="0" stop-color="#9bbcee"/><stop offset="0.5" stop-color="#6f9fe2"/><stop offset="0.52" stop-color="#5a90dc"/><stop offset="1" stop-color="#a6c6f0"/></linearGradient>
<linearGradient id="mPaper" x1="0" y1="0" x2="1" y2="1"><stop offset="0" stop-color="#ffffff"/><stop offset="1" stop-color="#dcdcdc"/></linearGradient>
<linearGradient id="mRed" x1="0" y1="0" x2="1" y2="1"><stop offset="0" stop-color="#e8473f"/><stop offset="1" stop-color="#b80c0c"/></linearGradient>
<linearGradient id="mPrn" x1="0" y1="0" x2="0" y2="1"><stop offset="0" stop-color="#f2f2f2"/><stop offset="1" stop-color="#b9b9b9"/></linearGradient>
</defs><g transform="translate(61.5 36.5) scale(0.5)"><path transform="translate(0 0)" d="M6.40 12.63 A12 12 0 1 1 14.30 27.70 Q18.8 26.3 21.85 22.37 A7.7 7.7 0 1 0 10.40 17.00 L14.80 21.80 L1.70 21.80 L1.70 7.50 Z" fill="url(#mGreen)" stroke="#23903a" stroke-width="1.3" stroke-linejoin="round"/></g><g transform="translate(61.5 56.5) scale(0.5)"><path transform="translate(32 0) scale(-1 1)" d="M6.40 12.63 A12 12 0 1 1 14.30 27.70 Q18.8 26.3 21.85 22.37 A7.7 7.7 0 1 0 10.40 17.00 L14.80 21.80 L1.70 21.80 L1.70 7.50 Z" fill="url(#mGreen)" stroke="#23903a" stroke-width="1.3" stroke-linejoin="round"/></g><g transform="translate(61.5 88.5) scale(0.5)"><ellipse cx="14" cy="27.6" rx="9" ry="1.6" fill="#888" opacity="0.35"/><g transform="translate(16.2 15.6) rotate(-45)"><rect x="-14.6" y="-4.6" width="29.2" height="9.2" rx="1.4" fill="url(#mRed)" stroke="#8e1010" stroke-width="0.9"/><rect x="-8.6" y="-1.7" width="23" height="3.4" fill="#fff"/><rect x="-14.6" y="-4.6" width="6.4" height="9.2" rx="1" fill="#fbfbfb" stroke="#9a8a8a" stroke-width="0.9"/></g></g><g transform="translate(61.5 120.5) scale(0.5)"><g transform="translate(1 0.6)"><path d="M14.0 16.4 L15.4 1.6 Q16.2 0.4 17.6 1.0 L17.8 15.8 Z" fill="#fafafa" stroke="#5e5e5e" stroke-width="1.2"/><path d="M16.0 15.2 L27.0 7.6 Q28.4 8.0 28.0 9.8 L17.4 17.6 Z" fill="#f6f6f6" stroke="#5e5e5e" stroke-width="1.2"/><ellipse cx="6.6" cy="17.6" rx="5.6" ry="3.2" transform="rotate(-18 6.6 17.6)" fill="none" stroke="#e3131b" stroke-width="2.6"/><ellipse cx="16.8" cy="24.2" rx="3.2" ry="5.6" transform="rotate(-8 16.8 24.2)" fill="none" stroke="#e3131b" stroke-width="2.6"/><path d="M11.2 15.6 Q14.4 15.2 16.2 18.6" fill="none" stroke="#e3131b" stroke-width="2.6"/></g></g><g transform="translate(61.5 140.5) scale(0.5)"><g transform="translate(1 0.6)"><path d="M14.0 16.4 L15.4 1.6 Q16.2 0.4 17.6 1.0 L17.8 15.8 Z" fill="#fafafa" stroke="#5e5e5e" stroke-width="1.2"/><path d="M16.0 15.2 L27.0 7.6 Q28.4 8.0 28.0 9.8 L17.4 17.6 Z" fill="#f6f6f6" stroke="#5e5e5e" stroke-width="1.2"/><ellipse cx="6.6" cy="17.6" rx="5.6" ry="3.2" transform="rotate(-18 6.6 17.6)" fill="none" stroke="#e3131b" stroke-width="2.6"/><ellipse cx="16.8" cy="24.2" rx="3.2" ry="5.6" transform="rotate(-8 16.8 24.2)" fill="none" stroke="#e3131b" stroke-width="2.6"/><path d="M11.2 15.6 Q14.4 15.2 16.2 18.6" fill="none" stroke="#e3131b" stroke-width="2.6"/><path d="M0.2 27.2 H6.6 M3.4 24 V30.4" stroke="#000" stroke-width="1.6" fill="none"/></g></g><g transform="translate(61.5 160.5) scale(0.5)"><g transform="translate(1 0.4)"><rect x="0.6" y="0.6" width="20.6" height="24.4" rx="1.6" fill="#fbfbfb" stroke="#b4b4b4" stroke-width="1.4"/><path d="M10.4 6.6 H28.4 Q29.9 6.6 29.9 8.1 V25.6 L24.4 31.2 H10.4 Q8.9 31.2 8.9 29.7 V8.1 Q8.9 6.6 10.4 6.6 Z" fill="url(#mPaper)" stroke="#9c9c9c" stroke-width="1.4"/><path d="M24.2 31.0 L24.6 26.2 L29.8 25.8 Z" fill="#a9a9a9" stroke="#909090" stroke-width="0.6"/><g stroke="#c9c9c9" stroke-width="1.6"><line x1="13" y1="14" x2="26.4" y2="14"/><line x1="13" y1="18" x2="26.4" y2="18"/><line x1="13" y1="22" x2="24.6" y2="22"/></g></g></g><g transform="translate(61.5 180.5) scale(0.5)"><g transform="translate(1 0.4)"><rect x="0.6" y="0.6" width="20.6" height="24.4" rx="1.6" fill="#fbfbfb" stroke="#b4b4b4" stroke-width="1.4"/><path d="M10.4 6.6 H28.4 Q29.9 6.6 29.9 8.1 V25.6 L24.4 31.2 H10.4 Q8.9 31.2 8.9 29.7 V8.1 Q8.9 6.6 10.4 6.6 Z" fill="url(#mPaper)" stroke="#9c9c9c" stroke-width="1.4"/><path d="M24.2 31.0 L24.6 26.2 L29.8 25.8 Z" fill="#a9a9a9" stroke="#909090" stroke-width="0.6"/><g stroke="#c9c9c9" stroke-width="1.6"><line x1="13" y1="14" x2="26.4" y2="14"/><line x1="13" y1="18" x2="26.4" y2="18"/><line x1="13" y1="22" x2="24.6" y2="22"/></g><path d="M1.4 26.8 H7.8 M4.6 23.6 V30" stroke="#000" stroke-width="1.6" fill="none"/></g></g><g transform="translate(61.5 200.5) scale(0.5)"><g transform="translate(2.4 0.6)"><rect x="0.9" y="3.6" width="25.6" height="26.8" rx="1.6" fill="#c98b2a" stroke="#9a6413" stroke-width="1.2"/><path d="M3.8 5.6 H23.6 V28 H3.8 Z" fill="url(#mPaper)" stroke="#a8a8a8" stroke-width="0.5"/><path d="M18.2 28 L18.6 23.4 L23.6 23 L23.6 28 Z" fill="#a9a9a9"/><g stroke="#c4c4c4" stroke-width="1.5"><line x1="7" y1="11.6" x2="20.6" y2="11.6"/><line x1="7" y1="15.4" x2="20.6" y2="15.4"/><line x1="7" y1="19.2" x2="18.6" y2="19.2"/></g><rect x="7" y="2.6" width="13.4" height="5" rx="1.6" fill="#9a9a92" stroke="#77776f" stroke-width="0.6"/><rect x="10" y="0.6" width="7.4" height="3" rx="1" fill="#8a8a82"/></g></g><g transform="translate(61.5 220.5) scale(0.5)"><g transform="translate(6.4 0.4) scale(0.74)"><rect x="0.9" y="3.6" width="25.6" height="26.8" rx="1.6" fill="#c98b2a" stroke="#9a6413" stroke-width="1.2"/><path d="M3.8 5.6 H23.6 V28 H3.8 Z" fill="url(#mPaper)" stroke="#a8a8a8" stroke-width="0.5"/><path d="M18.2 28 L18.6 23.4 L23.6 23 L23.6 28 Z" fill="#a9a9a9"/><g stroke="#c4c4c4" stroke-width="1.5"><line x1="7" y1="11.6" x2="20.6" y2="11.6"/><line x1="7" y1="15.4" x2="20.6" y2="15.4"/><line x1="7" y1="19.2" x2="18.6" y2="19.2"/></g><rect x="7" y="2.6" width="13.4" height="5" rx="1.6" fill="#9a9a92" stroke="#77776f" stroke-width="0.6"/><rect x="10" y="0.6" width="7.4" height="3" rx="1" fill="#8a8a82"/></g><line x1="4.6" y1="27.6" x2="27.6" y2="27.6" stroke="#d0d0d0" stroke-width="3"/><line x1="8" y1="27.6" x2="25" y2="27.6" stroke="#f25a5a" stroke-width="3" stroke-dasharray="4.2 2"/></g><g transform="translate(61.5 240.5) scale(0.5)"><g transform="translate(1 0.4)"><rect x="0.6" y="0.6" width="20.6" height="24.4" rx="1.6" fill="#fbfbfb" stroke="#b4b4b4" stroke-width="1.4"/><path d="M10.4 6.6 H28.4 Q29.9 6.6 29.9 8.1 V25.6 L24.4 31.2 H10.4 Q8.9 31.2 8.9 29.7 V8.1 Q8.9 6.6 10.4 6.6 Z" fill="url(#mPaper)" stroke="#9c9c9c" stroke-width="1.4"/><path d="M24.2 31.0 L24.6 26.2 L29.8 25.8 Z" fill="#a9a9a9" stroke="#909090" stroke-width="0.6"/><g stroke="#c9c9c9" stroke-width="1.6"><line x1="13" y1="14" x2="26.4" y2="14"/><line x1="13" y1="18" x2="26.4" y2="18"/><line x1="13" y1="22" x2="24.6" y2="22"/></g><path d="M0.4 22.6 C1.2 27.6 5.6 29.4 10.6 28.6 V31.8 L17.4 26.8 L10.6 21.6 V24.8 C7 25.4 3.4 24.8 0.4 22.6 Z" fill="#3fae4b" stroke="#2a8c3a" stroke-width="0.8"/></g></g><text x="61.9" y="312.6" font-size="10" fill="#1e1e1e" style="font-family:'Liberation Sans',sans-serif;">A</text><text x="70.3" y="319.1" font-size="9.6" fill="#1e1e1e" style="font-family:'Liberation Sans',sans-serif;">B</text><path d="M68.4 306.9 q3.6 -1.2 5.6 2.6" fill="none" stroke="#222" stroke-width="0.8"/><path d="M74.6 311.3 l0.6 -3.4 l-3.2 1.6 Z" fill="#111"/><text x="61.9" y="332.6" font-size="10" fill="#1e1e1e" style="font-family:'Liberation Sans',sans-serif;">A</text><text x="69.6" y="339.1" font-size="9.6" fill="#1e1e1e" style="font-family:'Liberation Sans',sans-serif;font-family:'Liberation Serif',serif;font-style:italic">A</text><path d="M68.4 326.9 q3.6 -1.2 5.6 2.6" fill="none" stroke="#222" stroke-width="0.8"/><path d="M74.6 331.3 l0.6 -3.4 l-3.2 1.6 Z" fill="#111"/><text x="61.7" y="357.1" font-size="14.6" fill="#1e1e1e" style="font-family:'Liberation Sans',sans-serif;">A</text><text x="72.6" y="357.1" font-size="6.4" fill="#1e1e1e" style="font-family:'Liberation Sans',sans-serif;">A</text><path d="M68.8 347.1 q3.6 -1.2 5.6 2.6" fill="none" stroke="#222" stroke-width="0.8"/><path d="M75 351.5 l0.6 -3.4 l-3.2 1.6 Z" fill="#111"/><g font-size="5.6" fill="#2a2a2a" style="font-family:'Liberation Sans',sans-serif"><text x="62" y="381.3">in</text><text x="62" y="386.1">m</text><text x="62" y="390.7" textLength="9" lengthAdjust="spacingAndGlyphs">mm</text></g><rect x="72.6" y="377.9" width="3" height="13" fill="#fafafa" stroke="#9a9a9a" stroke-width="0.6"/><path d="M72.8 381.5 h1.4 M72.8 384.5 h1.4 M72.8 387.5 h1.4" stroke="#999" stroke-width="0.5"/><path d="M66.30 430.50 L66.30 439.57 L68.43 437.56 L70.00 441.25 L71.51 440.58 L70.00 437.00 L72.80 437.00 Z" fill="#f6f6f6" stroke="#8e8e8e" stroke-width="0.9" stroke-linejoin="miter"/><rect x="63.2" y="461.1" width="12" height="14.2" fill="#f7f7f7" stroke="#b4b4b4" stroke-width="0.8"/><g transform="translate(64.6 463.3) scale(0.72)"><line x1="2.4" y1="12.4" x2="11.8" y2="3" stroke="#8f8f8f" stroke-width="2.1" stroke-linecap="round"/><path d="M0.6 2.6 L3.4 0.4 L5.4 2.2 L4.4 3.4 L12.8 11.8 L11.4 13.2 L3 4.8 L1.8 5.6 Z" fill="#a8a8a8" stroke="#777" stroke-width="0.4"/><line x1="2.2" y1="12.6" x2="6.4" y2="8.4" stroke="#2f6fc0" stroke-width="2.6" stroke-linecap="round"/><path d="M8.2 1.6 Q11.4 0.2 13.6 3.2" fill="none" stroke="#555" stroke-width="1.7"/></g><g transform="translate(62.2 481.5) scale(1)"><line x1="2.4" y1="12.4" x2="11.8" y2="3" stroke="#8f8f8f" stroke-width="2.1" stroke-linecap="round"/><path d="M0.6 2.6 L3.4 0.4 L5.4 2.2 L4.4 3.4 L12.8 11.8 L11.4 13.2 L3 4.8 L1.8 5.6 Z" fill="#a8a8a8" stroke="#777" stroke-width="0.4"/><line x1="2.2" y1="12.6" x2="6.4" y2="8.4" stroke="#2f6fc0" stroke-width="2.6" stroke-linecap="round"/><path d="M8.2 1.6 Q11.4 0.2 13.6 3.2" fill="none" stroke="#555" stroke-width="1.7"/></g></svg></div>
<!-- highlight overlays -->
<div class="b" style="left:41.1px;top:0.2px;width:35.9px;height:19.6px;background:rgba(250,110,110,0.28);"></div><div class="b" style="left:32.1px;top:-0.65px;width:53.9px;height:1.7px;background:linear-gradient(90deg,rgba(244,104,104,0) 0,rgba(244,104,104,0.8) 9px,rgba(244,104,104,0.8) calc(100% - 9px),rgba(244,104,104,0));"></div><div class="b" style="left:32.1px;top:18.95px;width:53.9px;height:1.7px;background:linear-gradient(90deg,rgba(244,104,104,0) 0,rgba(244,104,104,0.8) 9px,rgba(244,104,104,0.8) calc(100% - 9px),rgba(244,104,104,0));"></div><div class="b" style="left:40.25px;top:-8.8px;width:1.7px;height:37.6px;background:linear-gradient(180deg,rgba(244,104,104,0) 0,rgba(244,104,104,0.8) 9px,rgba(244,104,104,0.8) calc(100% - 9px),rgba(244,104,104,0));"></div><div class="b" style="left:76.15px;top:-8.8px;width:1.7px;height:37.6px;background:linear-gradient(180deg,rgba(244,104,104,0) 0,rgba(244,104,104,0.8) 9px,rgba(244,104,104,0.8) calc(100% - 9px),rgba(244,104,104,0));"></div>
<div class="b" style="left:32.1px;top:117.25px;width:235.9px;height:1.7px;background:linear-gradient(90deg,rgba(244,104,104,0) 0,rgba(244,104,104,0.8) 9px,rgba(244,104,104,0.8) calc(100% - 9px),rgba(244,104,104,0));"></div><div class="b" style="left:32.1px;top:136.85px;width:235.9px;height:1.7px;background:linear-gradient(90deg,rgba(244,104,104,0) 0,rgba(244,104,104,0.8) 9px,rgba(244,104,104,0.8) calc(100% - 9px),rgba(244,104,104,0));"></div><div class="b" style="left:40.25px;top:109.1px;width:1.7px;height:37.6px;background:linear-gradient(180deg,rgba(244,104,104,0) 0,rgba(244,104,104,0.8) 9px,rgba(244,104,104,0.8) calc(100% - 9px),rgba(244,104,104,0));"></div><div class="b" style="left:258.15px;top:109.1px;width:1.7px;height:37.6px;background:linear-gradient(180deg,rgba(244,104,104,0) 0,rgba(244,104,104,0.8) 9px,rgba(244,104,104,0.8) calc(100% - 9px),rgba(244,104,104,0));"></div>
<svg class="b" style="left:399px;top:16px;" width="80" height="80" viewBox="0 0 80 80"><defs><radialGradient id="ring" cx="50%" cy="50%" r="50%"><stop offset="0" stop-color="#ffffff" stop-opacity="0.0"/><stop offset="0.5" stop-color="#ffffff" stop-opacity="0.06"/><stop offset="0.78" stop-color="#f4f7fa" stop-opacity="0.34"/><stop offset="0.83" stop-color="#c6d3df" stop-opacity="0.55"/><stop offset="0.88" stop-color="#a9bccd" stop-opacity="0.72"/><stop offset="0.93" stop-color="#a4b8ca" stop-opacity="0.74"/><stop offset="0.975" stop-color="#b3c4d3" stop-opacity="0.5"/><stop offset="1" stop-color="#b3c4d3" stop-opacity="0"/></radialGradient></defs><circle cx="40" cy="40" r="40" fill="url(#ring)"/></svg>
<svg class="b" style="left:436.6px;top:54.6px;" width="22" height="32" viewBox="0 0 22 32"><path d="M2.8 2.0 L2.8 23.6 L8.2 19.4 L12.9 28.7 L16.2 27.1 L11.8 17.8 L17.3 17.3 Z" fill="#fff" stroke="#000" stroke-width="1.4" stroke-linejoin="miter"/></svg>
</div></body></html>
